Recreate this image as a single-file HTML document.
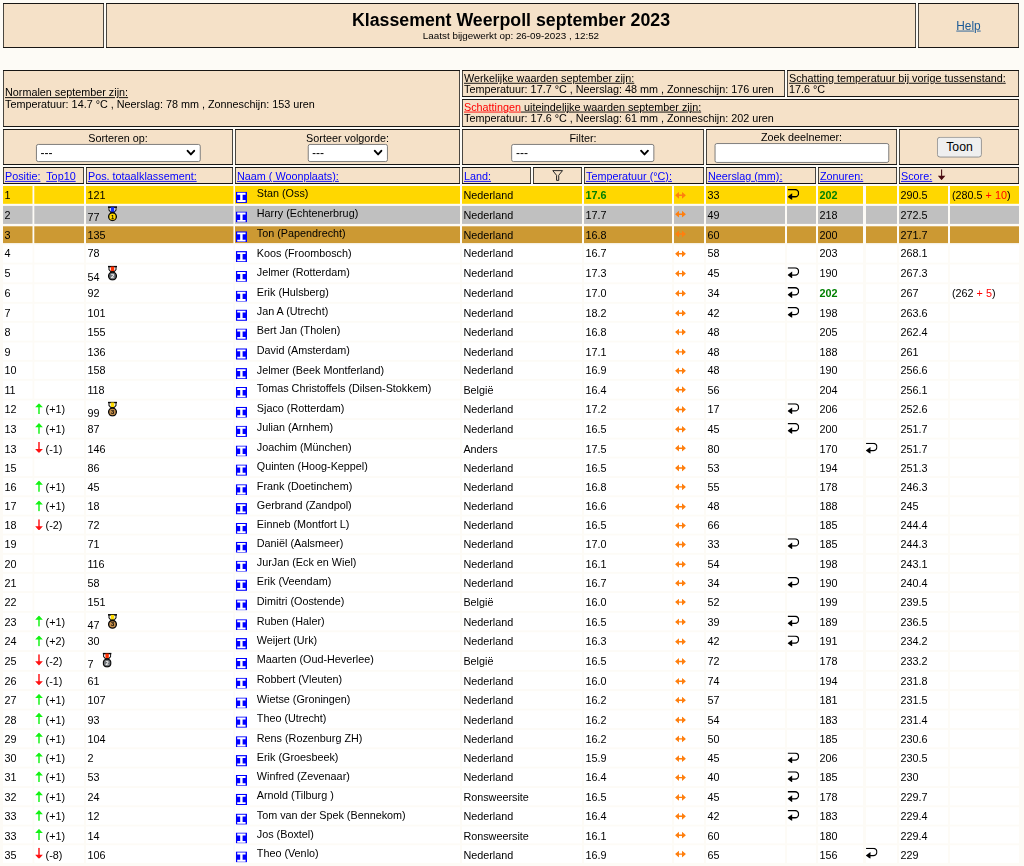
<!DOCTYPE html>
<html lang="nl">
<head>
<meta charset="utf-8">
<title>Klassement Weerpoll september 2023</title>
<style>
html,body{margin:0;padding:0;background:#fdfbf6;overflow:hidden;}
body{width:1024px;height:866px;position:relative;}
#w{position:absolute;left:0;top:0;width:1137.78px;height:962.3px;transform:scale(0.9);transform-origin:0 0;
   font-family:"Liberation Sans",Arial,sans-serif;font-size:12px;line-height:14px;color:#000;}
#w div,#w a,#w svg,#w select,#w input,#w button,#w span.a{position:absolute;box-sizing:border-box;white-space:nowrap;}
.hb{background:#181614;}
.hc{background:#f5e1c8;}
.c{background:#fff;}
.t{color:#000;}
.u{text-decoration:underline;}
a.l{color:#0000ff;text-decoration:underline;}
.g{color:#008000;font-weight:bold;}
.r{color:#ff0000;}
.lab{text-align:center;}
select.s{appearance:none;-webkit-appearance:none;background:#fff;border:1px solid #707070;border-radius:2.5px;
  font-family:"Liberation Sans",Arial,sans-serif;font-size:13.33px;color:#000;padding:0 0 0 4px;margin:0;}
input.s{background:#fff;border:1px solid #707070;border-radius:2.5px;padding:0;margin:0;}
button.s{background:#efefef;border:1px solid #8a8a8a;border-radius:3.5px;font-family:"Liberation Sans",Arial,sans-serif;
  font-size:13.6px;color:#000;padding:0;margin:0;text-align:center;}
</style>
</head>
<body>
<svg id="bg" width="1024" height="866" viewBox="0 0 1024 866" style="position:absolute;left:0;top:0">
<rect x="3" y="3" width="101" height="45" fill="#4a4640"/>
<rect x="3" y="3" width="101" height="1" fill="#181614"/>
<rect x="3" y="47" width="101" height="1" fill="#181614"/>
<rect x="4" y="4" width="99" height="43" fill="#f5e1c8"/>
<rect x="106" y="3" width="810" height="45" fill="#4a4640"/>
<rect x="106" y="3" width="810" height="1" fill="#181614"/>
<rect x="106" y="47" width="810" height="1" fill="#181614"/>
<rect x="107" y="4" width="808" height="43" fill="#f5e1c8"/>
<rect x="918" y="3" width="101" height="45" fill="#4a4640"/>
<rect x="918" y="3" width="101" height="1" fill="#181614"/>
<rect x="918" y="47" width="101" height="1" fill="#181614"/>
<rect x="919" y="4" width="99" height="43" fill="#f5e1c8"/>
<rect x="3" y="70" width="457" height="57" fill="#4a4640"/>
<rect x="3" y="70" width="457" height="1" fill="#181614"/>
<rect x="3" y="126" width="457" height="1" fill="#181614"/>
<rect x="4" y="71" width="455" height="55" fill="#f5e1c8"/>
<rect x="462" y="70" width="323" height="27" fill="#4a4640"/>
<rect x="462" y="70" width="323" height="1" fill="#181614"/>
<rect x="462" y="96" width="323" height="1" fill="#181614"/>
<rect x="463" y="71" width="321" height="25" fill="#f5e1c8"/>
<rect x="787" y="70" width="232" height="27" fill="#4a4640"/>
<rect x="787" y="70" width="232" height="1" fill="#181614"/>
<rect x="787" y="96" width="232" height="1" fill="#181614"/>
<rect x="788" y="71" width="230" height="25" fill="#f5e1c8"/>
<rect x="462" y="99" width="557" height="28" fill="#4a4640"/>
<rect x="462" y="99" width="557" height="1" fill="#181614"/>
<rect x="462" y="126" width="557" height="1" fill="#181614"/>
<rect x="463" y="100" width="555" height="26" fill="#f5e1c8"/>
<rect x="3" y="129" width="230" height="36" fill="#4a4640"/>
<rect x="3" y="129" width="230" height="1" fill="#181614"/>
<rect x="3" y="164" width="230" height="1" fill="#181614"/>
<rect x="4" y="130" width="228" height="34" fill="#f5e1c8"/>
<rect x="235" y="129" width="225" height="36" fill="#4a4640"/>
<rect x="235" y="129" width="225" height="1" fill="#181614"/>
<rect x="235" y="164" width="225" height="1" fill="#181614"/>
<rect x="236" y="130" width="223" height="34" fill="#f5e1c8"/>
<rect x="462" y="129" width="242" height="36" fill="#4a4640"/>
<rect x="462" y="129" width="242" height="1" fill="#181614"/>
<rect x="462" y="164" width="242" height="1" fill="#181614"/>
<rect x="463" y="130" width="240" height="34" fill="#f5e1c8"/>
<rect x="706" y="129" width="191" height="36" fill="#4a4640"/>
<rect x="706" y="129" width="191" height="1" fill="#181614"/>
<rect x="706" y="164" width="191" height="1" fill="#181614"/>
<rect x="707" y="130" width="189" height="34" fill="#f5e1c8"/>
<rect x="899" y="129" width="120" height="36" fill="#4a4640"/>
<rect x="899" y="129" width="120" height="1" fill="#181614"/>
<rect x="899" y="164" width="120" height="1" fill="#181614"/>
<rect x="900" y="130" width="118" height="34" fill="#f5e1c8"/>
<rect x="3" y="167" width="81" height="17" fill="#4a4640"/>
<rect x="3" y="167" width="81" height="1" fill="#181614"/>
<rect x="3" y="183" width="81" height="1" fill="#181614"/>
<rect x="4" y="168" width="79" height="15" fill="#f5e1c8"/>
<rect x="86" y="167" width="147" height="17" fill="#4a4640"/>
<rect x="86" y="167" width="147" height="1" fill="#181614"/>
<rect x="86" y="183" width="147" height="1" fill="#181614"/>
<rect x="87" y="168" width="145" height="15" fill="#f5e1c8"/>
<rect x="235" y="167" width="225" height="17" fill="#4a4640"/>
<rect x="235" y="167" width="225" height="1" fill="#181614"/>
<rect x="235" y="183" width="225" height="1" fill="#181614"/>
<rect x="236" y="168" width="223" height="15" fill="#f5e1c8"/>
<rect x="462" y="167" width="69" height="17" fill="#4a4640"/>
<rect x="462" y="167" width="69" height="1" fill="#181614"/>
<rect x="462" y="183" width="69" height="1" fill="#181614"/>
<rect x="463" y="168" width="67" height="15" fill="#f5e1c8"/>
<rect x="533" y="167" width="49" height="17" fill="#4a4640"/>
<rect x="533" y="167" width="49" height="1" fill="#181614"/>
<rect x="533" y="183" width="49" height="1" fill="#181614"/>
<rect x="534" y="168" width="47" height="15" fill="#f5e1c8"/>
<rect x="584" y="167" width="120" height="17" fill="#4a4640"/>
<rect x="584" y="167" width="120" height="1" fill="#181614"/>
<rect x="584" y="183" width="120" height="1" fill="#181614"/>
<rect x="585" y="168" width="118" height="15" fill="#f5e1c8"/>
<rect x="706" y="167" width="110" height="17" fill="#4a4640"/>
<rect x="706" y="167" width="110" height="1" fill="#181614"/>
<rect x="706" y="183" width="110" height="1" fill="#181614"/>
<rect x="707" y="168" width="108" height="15" fill="#f5e1c8"/>
<rect x="818" y="167" width="79" height="17" fill="#4a4640"/>
<rect x="818" y="167" width="79" height="1" fill="#181614"/>
<rect x="818" y="183" width="79" height="1" fill="#181614"/>
<rect x="819" y="168" width="77" height="15" fill="#f5e1c8"/>
<rect x="899" y="167" width="120" height="17" fill="#4a4640"/>
<rect x="899" y="167" width="120" height="1" fill="#181614"/>
<rect x="899" y="183" width="120" height="1" fill="#181614"/>
<rect x="900" y="168" width="118" height="15" fill="#f5e1c8"/>
<rect x="3" y="186" width="29.5" height="17.8" fill="#ffd700"/>
<rect x="34.3" y="186" width="49.7" height="17.8" fill="#ffd700"/>
<rect x="86" y="186" width="147.4" height="17.8" fill="#ffd700"/>
<rect x="235" y="186" width="225" height="17.8" fill="#ffd700"/>
<rect x="462" y="186" width="120" height="17.8" fill="#ffd700"/>
<rect x="584" y="186" width="88" height="17.8" fill="#ffd700"/>
<rect x="674" y="186" width="30" height="17.8" fill="#ffd700"/>
<rect x="706" y="186" width="79" height="17.8" fill="#ffd700"/>
<rect x="787" y="186" width="29" height="17.8" fill="#ffd700"/>
<rect x="818" y="186" width="45" height="17.8" fill="#ffd700"/>
<rect x="866" y="186" width="31" height="17.8" fill="#ffd700"/>
<rect x="899" y="186" width="49" height="17.8" fill="#ffd700"/>
<rect x="950" y="186" width="69" height="17.8" fill="#ffd700"/>
<rect x="3" y="205.9" width="29.5" height="18" fill="#c0c0c0"/>
<rect x="34.3" y="205.9" width="49.7" height="18" fill="#c0c0c0"/>
<rect x="86" y="205.9" width="147.4" height="18" fill="#c0c0c0"/>
<rect x="235" y="205.9" width="225" height="18" fill="#c0c0c0"/>
<rect x="462" y="205.9" width="120" height="18" fill="#c0c0c0"/>
<rect x="584" y="205.9" width="88" height="18" fill="#c0c0c0"/>
<rect x="674" y="205.9" width="30" height="18" fill="#c0c0c0"/>
<rect x="706" y="205.9" width="79" height="18" fill="#c0c0c0"/>
<rect x="787" y="205.9" width="29" height="18" fill="#c0c0c0"/>
<rect x="818" y="205.9" width="45" height="18" fill="#c0c0c0"/>
<rect x="866" y="205.9" width="31" height="18" fill="#c0c0c0"/>
<rect x="899" y="205.9" width="49" height="18" fill="#c0c0c0"/>
<rect x="950" y="205.9" width="69" height="18" fill="#c0c0c0"/>
<rect x="3" y="226.3" width="29.5" height="16.8" fill="#cc9933"/>
<rect x="34.3" y="226.3" width="49.7" height="16.8" fill="#cc9933"/>
<rect x="86" y="226.3" width="147.4" height="16.8" fill="#cc9933"/>
<rect x="235" y="226.3" width="225" height="16.8" fill="#cc9933"/>
<rect x="462" y="226.3" width="120" height="16.8" fill="#cc9933"/>
<rect x="584" y="226.3" width="88" height="16.8" fill="#cc9933"/>
<rect x="674" y="226.3" width="30" height="16.8" fill="#cc9933"/>
<rect x="706" y="226.3" width="79" height="16.8" fill="#cc9933"/>
<rect x="787" y="226.3" width="29" height="16.8" fill="#cc9933"/>
<rect x="818" y="226.3" width="45" height="16.8" fill="#cc9933"/>
<rect x="866" y="226.3" width="31" height="16.8" fill="#cc9933"/>
<rect x="899" y="226.3" width="49" height="16.8" fill="#cc9933"/>
<rect x="950" y="226.3" width="69" height="16.8" fill="#cc9933"/>
<rect x="3" y="244.75" width="29.5" height="17.85" fill="#ffffff"/>
<rect x="34.3" y="244.75" width="49.7" height="17.85" fill="#ffffff"/>
<rect x="86" y="244.75" width="147.4" height="17.85" fill="#ffffff"/>
<rect x="235" y="244.75" width="225" height="17.85" fill="#ffffff"/>
<rect x="462" y="244.75" width="120" height="17.85" fill="#ffffff"/>
<rect x="584" y="244.75" width="88" height="17.85" fill="#ffffff"/>
<rect x="674" y="244.75" width="30" height="17.85" fill="#ffffff"/>
<rect x="706" y="244.75" width="79" height="17.85" fill="#ffffff"/>
<rect x="787" y="244.75" width="29" height="17.85" fill="#ffffff"/>
<rect x="818" y="244.75" width="45" height="17.85" fill="#ffffff"/>
<rect x="866" y="244.75" width="31" height="17.85" fill="#ffffff"/>
<rect x="899" y="244.75" width="49" height="17.85" fill="#ffffff"/>
<rect x="950" y="244.75" width="69" height="17.85" fill="#ffffff"/>
<rect x="3" y="264.5" width="29.5" height="17.85" fill="#ffffff"/>
<rect x="34.3" y="264.5" width="49.7" height="17.85" fill="#ffffff"/>
<rect x="86" y="264.5" width="147.4" height="17.85" fill="#ffffff"/>
<rect x="235" y="264.5" width="225" height="17.85" fill="#ffffff"/>
<rect x="462" y="264.5" width="120" height="17.85" fill="#ffffff"/>
<rect x="584" y="264.5" width="88" height="17.85" fill="#ffffff"/>
<rect x="674" y="264.5" width="30" height="17.85" fill="#ffffff"/>
<rect x="706" y="264.5" width="79" height="17.85" fill="#ffffff"/>
<rect x="787" y="264.5" width="29" height="17.85" fill="#ffffff"/>
<rect x="818" y="264.5" width="45" height="17.85" fill="#ffffff"/>
<rect x="866" y="264.5" width="31" height="17.85" fill="#ffffff"/>
<rect x="899" y="264.5" width="49" height="17.85" fill="#ffffff"/>
<rect x="950" y="264.5" width="69" height="17.85" fill="#ffffff"/>
<rect x="3" y="284.25" width="29.5" height="17.6" fill="#ffffff"/>
<rect x="34.3" y="284.25" width="49.7" height="17.6" fill="#ffffff"/>
<rect x="86" y="284.25" width="147.4" height="17.6" fill="#ffffff"/>
<rect x="235" y="284.25" width="225" height="17.6" fill="#ffffff"/>
<rect x="462" y="284.25" width="120" height="17.6" fill="#ffffff"/>
<rect x="584" y="284.25" width="88" height="17.6" fill="#ffffff"/>
<rect x="674" y="284.25" width="30" height="17.6" fill="#ffffff"/>
<rect x="706" y="284.25" width="79" height="17.6" fill="#ffffff"/>
<rect x="787" y="284.25" width="29" height="17.6" fill="#ffffff"/>
<rect x="818" y="284.25" width="45" height="17.6" fill="#ffffff"/>
<rect x="866" y="284.25" width="31" height="17.6" fill="#ffffff"/>
<rect x="899" y="284.25" width="49" height="17.6" fill="#ffffff"/>
<rect x="950" y="284.25" width="69" height="17.6" fill="#ffffff"/>
<rect x="3" y="303.75" width="29.5" height="17.1" fill="#ffffff"/>
<rect x="34.3" y="303.75" width="49.7" height="17.1" fill="#ffffff"/>
<rect x="86" y="303.75" width="147.4" height="17.1" fill="#ffffff"/>
<rect x="235" y="303.75" width="225" height="17.1" fill="#ffffff"/>
<rect x="462" y="303.75" width="120" height="17.1" fill="#ffffff"/>
<rect x="584" y="303.75" width="88" height="17.1" fill="#ffffff"/>
<rect x="674" y="303.75" width="30" height="17.1" fill="#ffffff"/>
<rect x="706" y="303.75" width="79" height="17.1" fill="#ffffff"/>
<rect x="787" y="303.75" width="29" height="17.1" fill="#ffffff"/>
<rect x="818" y="303.75" width="45" height="17.1" fill="#ffffff"/>
<rect x="866" y="303.75" width="31" height="17.1" fill="#ffffff"/>
<rect x="899" y="303.75" width="49" height="17.1" fill="#ffffff"/>
<rect x="950" y="303.75" width="69" height="17.1" fill="#ffffff"/>
<rect x="3" y="322.75" width="29.5" height="17.85" fill="#ffffff"/>
<rect x="34.3" y="322.75" width="49.7" height="17.85" fill="#ffffff"/>
<rect x="86" y="322.75" width="147.4" height="17.85" fill="#ffffff"/>
<rect x="235" y="322.75" width="225" height="17.85" fill="#ffffff"/>
<rect x="462" y="322.75" width="120" height="17.85" fill="#ffffff"/>
<rect x="584" y="322.75" width="88" height="17.85" fill="#ffffff"/>
<rect x="674" y="322.75" width="30" height="17.85" fill="#ffffff"/>
<rect x="706" y="322.75" width="79" height="17.85" fill="#ffffff"/>
<rect x="787" y="322.75" width="29" height="17.85" fill="#ffffff"/>
<rect x="818" y="322.75" width="45" height="17.85" fill="#ffffff"/>
<rect x="866" y="322.75" width="31" height="17.85" fill="#ffffff"/>
<rect x="899" y="322.75" width="49" height="17.85" fill="#ffffff"/>
<rect x="950" y="322.75" width="69" height="17.85" fill="#ffffff"/>
<rect x="3" y="342.5" width="29.5" height="17.35" fill="#ffffff"/>
<rect x="34.3" y="342.5" width="49.7" height="17.35" fill="#ffffff"/>
<rect x="86" y="342.5" width="147.4" height="17.35" fill="#ffffff"/>
<rect x="235" y="342.5" width="225" height="17.35" fill="#ffffff"/>
<rect x="462" y="342.5" width="120" height="17.35" fill="#ffffff"/>
<rect x="584" y="342.5" width="88" height="17.35" fill="#ffffff"/>
<rect x="674" y="342.5" width="30" height="17.35" fill="#ffffff"/>
<rect x="706" y="342.5" width="79" height="17.35" fill="#ffffff"/>
<rect x="787" y="342.5" width="29" height="17.35" fill="#ffffff"/>
<rect x="818" y="342.5" width="45" height="17.35" fill="#ffffff"/>
<rect x="866" y="342.5" width="31" height="17.35" fill="#ffffff"/>
<rect x="899" y="342.5" width="49" height="17.35" fill="#ffffff"/>
<rect x="950" y="342.5" width="69" height="17.35" fill="#ffffff"/>
<rect x="3" y="361.75" width="29.5" height="17.1" fill="#ffffff"/>
<rect x="34.3" y="361.75" width="49.7" height="17.1" fill="#ffffff"/>
<rect x="86" y="361.75" width="147.4" height="17.1" fill="#ffffff"/>
<rect x="235" y="361.75" width="225" height="17.1" fill="#ffffff"/>
<rect x="462" y="361.75" width="120" height="17.1" fill="#ffffff"/>
<rect x="584" y="361.75" width="88" height="17.1" fill="#ffffff"/>
<rect x="674" y="361.75" width="30" height="17.1" fill="#ffffff"/>
<rect x="706" y="361.75" width="79" height="17.1" fill="#ffffff"/>
<rect x="787" y="361.75" width="29" height="17.1" fill="#ffffff"/>
<rect x="818" y="361.75" width="45" height="17.1" fill="#ffffff"/>
<rect x="866" y="361.75" width="31" height="17.1" fill="#ffffff"/>
<rect x="899" y="361.75" width="49" height="17.1" fill="#ffffff"/>
<rect x="950" y="361.75" width="69" height="17.1" fill="#ffffff"/>
<rect x="3" y="380.75" width="29.5" height="17.85" fill="#ffffff"/>
<rect x="34.3" y="380.75" width="49.7" height="17.85" fill="#ffffff"/>
<rect x="86" y="380.75" width="147.4" height="17.85" fill="#ffffff"/>
<rect x="235" y="380.75" width="225" height="17.85" fill="#ffffff"/>
<rect x="462" y="380.75" width="120" height="17.85" fill="#ffffff"/>
<rect x="584" y="380.75" width="88" height="17.85" fill="#ffffff"/>
<rect x="674" y="380.75" width="30" height="17.85" fill="#ffffff"/>
<rect x="706" y="380.75" width="79" height="17.85" fill="#ffffff"/>
<rect x="787" y="380.75" width="29" height="17.85" fill="#ffffff"/>
<rect x="818" y="380.75" width="45" height="17.85" fill="#ffffff"/>
<rect x="866" y="380.75" width="31" height="17.85" fill="#ffffff"/>
<rect x="899" y="380.75" width="49" height="17.85" fill="#ffffff"/>
<rect x="950" y="380.75" width="69" height="17.85" fill="#ffffff"/>
<rect x="3" y="400.5" width="29.5" height="17.6" fill="#ffffff"/>
<rect x="34.3" y="400.5" width="49.7" height="17.6" fill="#ffffff"/>
<rect x="86" y="400.5" width="147.4" height="17.6" fill="#ffffff"/>
<rect x="235" y="400.5" width="225" height="17.6" fill="#ffffff"/>
<rect x="462" y="400.5" width="120" height="17.6" fill="#ffffff"/>
<rect x="584" y="400.5" width="88" height="17.6" fill="#ffffff"/>
<rect x="674" y="400.5" width="30" height="17.6" fill="#ffffff"/>
<rect x="706" y="400.5" width="79" height="17.6" fill="#ffffff"/>
<rect x="787" y="400.5" width="29" height="17.6" fill="#ffffff"/>
<rect x="818" y="400.5" width="45" height="17.6" fill="#ffffff"/>
<rect x="866" y="400.5" width="31" height="17.6" fill="#ffffff"/>
<rect x="899" y="400.5" width="49" height="17.6" fill="#ffffff"/>
<rect x="950" y="400.5" width="69" height="17.6" fill="#ffffff"/>
<rect x="3" y="420" width="29.5" height="17.6" fill="#ffffff"/>
<rect x="34.3" y="420" width="49.7" height="17.6" fill="#ffffff"/>
<rect x="86" y="420" width="147.4" height="17.6" fill="#ffffff"/>
<rect x="235" y="420" width="225" height="17.6" fill="#ffffff"/>
<rect x="462" y="420" width="120" height="17.6" fill="#ffffff"/>
<rect x="584" y="420" width="88" height="17.6" fill="#ffffff"/>
<rect x="674" y="420" width="30" height="17.6" fill="#ffffff"/>
<rect x="706" y="420" width="79" height="17.6" fill="#ffffff"/>
<rect x="787" y="420" width="29" height="17.6" fill="#ffffff"/>
<rect x="818" y="420" width="45" height="17.6" fill="#ffffff"/>
<rect x="866" y="420" width="31" height="17.6" fill="#ffffff"/>
<rect x="899" y="420" width="49" height="17.6" fill="#ffffff"/>
<rect x="950" y="420" width="69" height="17.6" fill="#ffffff"/>
<rect x="3" y="439.5" width="29.5" height="17.1" fill="#ffffff"/>
<rect x="34.3" y="439.5" width="49.7" height="17.1" fill="#ffffff"/>
<rect x="86" y="439.5" width="147.4" height="17.1" fill="#ffffff"/>
<rect x="235" y="439.5" width="225" height="17.1" fill="#ffffff"/>
<rect x="462" y="439.5" width="120" height="17.1" fill="#ffffff"/>
<rect x="584" y="439.5" width="88" height="17.1" fill="#ffffff"/>
<rect x="674" y="439.5" width="30" height="17.1" fill="#ffffff"/>
<rect x="706" y="439.5" width="79" height="17.1" fill="#ffffff"/>
<rect x="787" y="439.5" width="29" height="17.1" fill="#ffffff"/>
<rect x="818" y="439.5" width="45" height="17.1" fill="#ffffff"/>
<rect x="866" y="439.5" width="31" height="17.1" fill="#ffffff"/>
<rect x="899" y="439.5" width="49" height="17.1" fill="#ffffff"/>
<rect x="950" y="439.5" width="69" height="17.1" fill="#ffffff"/>
<rect x="3" y="458.5" width="29.5" height="17.6" fill="#ffffff"/>
<rect x="34.3" y="458.5" width="49.7" height="17.6" fill="#ffffff"/>
<rect x="86" y="458.5" width="147.4" height="17.6" fill="#ffffff"/>
<rect x="235" y="458.5" width="225" height="17.6" fill="#ffffff"/>
<rect x="462" y="458.5" width="120" height="17.6" fill="#ffffff"/>
<rect x="584" y="458.5" width="88" height="17.6" fill="#ffffff"/>
<rect x="674" y="458.5" width="30" height="17.6" fill="#ffffff"/>
<rect x="706" y="458.5" width="79" height="17.6" fill="#ffffff"/>
<rect x="787" y="458.5" width="29" height="17.6" fill="#ffffff"/>
<rect x="818" y="458.5" width="45" height="17.6" fill="#ffffff"/>
<rect x="866" y="458.5" width="31" height="17.6" fill="#ffffff"/>
<rect x="899" y="458.5" width="49" height="17.6" fill="#ffffff"/>
<rect x="950" y="458.5" width="69" height="17.6" fill="#ffffff"/>
<rect x="3" y="478" width="29.5" height="17.35" fill="#ffffff"/>
<rect x="34.3" y="478" width="49.7" height="17.35" fill="#ffffff"/>
<rect x="86" y="478" width="147.4" height="17.35" fill="#ffffff"/>
<rect x="235" y="478" width="225" height="17.35" fill="#ffffff"/>
<rect x="462" y="478" width="120" height="17.35" fill="#ffffff"/>
<rect x="584" y="478" width="88" height="17.35" fill="#ffffff"/>
<rect x="674" y="478" width="30" height="17.35" fill="#ffffff"/>
<rect x="706" y="478" width="79" height="17.35" fill="#ffffff"/>
<rect x="787" y="478" width="29" height="17.35" fill="#ffffff"/>
<rect x="818" y="478" width="45" height="17.35" fill="#ffffff"/>
<rect x="866" y="478" width="31" height="17.35" fill="#ffffff"/>
<rect x="899" y="478" width="49" height="17.35" fill="#ffffff"/>
<rect x="950" y="478" width="69" height="17.35" fill="#ffffff"/>
<rect x="3" y="497.25" width="29.5" height="17.35" fill="#ffffff"/>
<rect x="34.3" y="497.25" width="49.7" height="17.35" fill="#ffffff"/>
<rect x="86" y="497.25" width="147.4" height="17.35" fill="#ffffff"/>
<rect x="235" y="497.25" width="225" height="17.35" fill="#ffffff"/>
<rect x="462" y="497.25" width="120" height="17.35" fill="#ffffff"/>
<rect x="584" y="497.25" width="88" height="17.35" fill="#ffffff"/>
<rect x="674" y="497.25" width="30" height="17.35" fill="#ffffff"/>
<rect x="706" y="497.25" width="79" height="17.35" fill="#ffffff"/>
<rect x="787" y="497.25" width="29" height="17.35" fill="#ffffff"/>
<rect x="818" y="497.25" width="45" height="17.35" fill="#ffffff"/>
<rect x="866" y="497.25" width="31" height="17.35" fill="#ffffff"/>
<rect x="899" y="497.25" width="49" height="17.35" fill="#ffffff"/>
<rect x="950" y="497.25" width="69" height="17.35" fill="#ffffff"/>
<rect x="3" y="516.5" width="29.5" height="17.1" fill="#ffffff"/>
<rect x="34.3" y="516.5" width="49.7" height="17.1" fill="#ffffff"/>
<rect x="86" y="516.5" width="147.4" height="17.1" fill="#ffffff"/>
<rect x="235" y="516.5" width="225" height="17.1" fill="#ffffff"/>
<rect x="462" y="516.5" width="120" height="17.1" fill="#ffffff"/>
<rect x="584" y="516.5" width="88" height="17.1" fill="#ffffff"/>
<rect x="674" y="516.5" width="30" height="17.1" fill="#ffffff"/>
<rect x="706" y="516.5" width="79" height="17.1" fill="#ffffff"/>
<rect x="787" y="516.5" width="29" height="17.1" fill="#ffffff"/>
<rect x="818" y="516.5" width="45" height="17.1" fill="#ffffff"/>
<rect x="866" y="516.5" width="31" height="17.1" fill="#ffffff"/>
<rect x="899" y="516.5" width="49" height="17.1" fill="#ffffff"/>
<rect x="950" y="516.5" width="69" height="17.1" fill="#ffffff"/>
<rect x="3" y="535.5" width="29.5" height="17.35" fill="#ffffff"/>
<rect x="34.3" y="535.5" width="49.7" height="17.35" fill="#ffffff"/>
<rect x="86" y="535.5" width="147.4" height="17.35" fill="#ffffff"/>
<rect x="235" y="535.5" width="225" height="17.35" fill="#ffffff"/>
<rect x="462" y="535.5" width="120" height="17.35" fill="#ffffff"/>
<rect x="584" y="535.5" width="88" height="17.35" fill="#ffffff"/>
<rect x="674" y="535.5" width="30" height="17.35" fill="#ffffff"/>
<rect x="706" y="535.5" width="79" height="17.35" fill="#ffffff"/>
<rect x="787" y="535.5" width="29" height="17.35" fill="#ffffff"/>
<rect x="818" y="535.5" width="45" height="17.35" fill="#ffffff"/>
<rect x="866" y="535.5" width="31" height="17.35" fill="#ffffff"/>
<rect x="899" y="535.5" width="49" height="17.35" fill="#ffffff"/>
<rect x="950" y="535.5" width="69" height="17.35" fill="#ffffff"/>
<rect x="3" y="554.75" width="29.5" height="17.1" fill="#ffffff"/>
<rect x="34.3" y="554.75" width="49.7" height="17.1" fill="#ffffff"/>
<rect x="86" y="554.75" width="147.4" height="17.1" fill="#ffffff"/>
<rect x="235" y="554.75" width="225" height="17.1" fill="#ffffff"/>
<rect x="462" y="554.75" width="120" height="17.1" fill="#ffffff"/>
<rect x="584" y="554.75" width="88" height="17.1" fill="#ffffff"/>
<rect x="674" y="554.75" width="30" height="17.1" fill="#ffffff"/>
<rect x="706" y="554.75" width="79" height="17.1" fill="#ffffff"/>
<rect x="787" y="554.75" width="29" height="17.1" fill="#ffffff"/>
<rect x="818" y="554.75" width="45" height="17.1" fill="#ffffff"/>
<rect x="866" y="554.75" width="31" height="17.1" fill="#ffffff"/>
<rect x="899" y="554.75" width="49" height="17.1" fill="#ffffff"/>
<rect x="950" y="554.75" width="69" height="17.1" fill="#ffffff"/>
<rect x="3" y="573.75" width="29.5" height="17.35" fill="#ffffff"/>
<rect x="34.3" y="573.75" width="49.7" height="17.35" fill="#ffffff"/>
<rect x="86" y="573.75" width="147.4" height="17.35" fill="#ffffff"/>
<rect x="235" y="573.75" width="225" height="17.35" fill="#ffffff"/>
<rect x="462" y="573.75" width="120" height="17.35" fill="#ffffff"/>
<rect x="584" y="573.75" width="88" height="17.35" fill="#ffffff"/>
<rect x="674" y="573.75" width="30" height="17.35" fill="#ffffff"/>
<rect x="706" y="573.75" width="79" height="17.35" fill="#ffffff"/>
<rect x="787" y="573.75" width="29" height="17.35" fill="#ffffff"/>
<rect x="818" y="573.75" width="45" height="17.35" fill="#ffffff"/>
<rect x="866" y="573.75" width="31" height="17.35" fill="#ffffff"/>
<rect x="899" y="573.75" width="49" height="17.35" fill="#ffffff"/>
<rect x="950" y="573.75" width="69" height="17.35" fill="#ffffff"/>
<rect x="3" y="593" width="29.5" height="17.85" fill="#ffffff"/>
<rect x="34.3" y="593" width="49.7" height="17.85" fill="#ffffff"/>
<rect x="86" y="593" width="147.4" height="17.85" fill="#ffffff"/>
<rect x="235" y="593" width="225" height="17.85" fill="#ffffff"/>
<rect x="462" y="593" width="120" height="17.85" fill="#ffffff"/>
<rect x="584" y="593" width="88" height="17.85" fill="#ffffff"/>
<rect x="674" y="593" width="30" height="17.85" fill="#ffffff"/>
<rect x="706" y="593" width="79" height="17.85" fill="#ffffff"/>
<rect x="787" y="593" width="29" height="17.85" fill="#ffffff"/>
<rect x="818" y="593" width="45" height="17.85" fill="#ffffff"/>
<rect x="866" y="593" width="31" height="17.85" fill="#ffffff"/>
<rect x="899" y="593" width="49" height="17.85" fill="#ffffff"/>
<rect x="950" y="593" width="69" height="17.85" fill="#ffffff"/>
<rect x="3" y="612.75" width="29.5" height="17.6" fill="#ffffff"/>
<rect x="34.3" y="612.75" width="49.7" height="17.6" fill="#ffffff"/>
<rect x="86" y="612.75" width="147.4" height="17.6" fill="#ffffff"/>
<rect x="235" y="612.75" width="225" height="17.6" fill="#ffffff"/>
<rect x="462" y="612.75" width="120" height="17.6" fill="#ffffff"/>
<rect x="584" y="612.75" width="88" height="17.6" fill="#ffffff"/>
<rect x="674" y="612.75" width="30" height="17.6" fill="#ffffff"/>
<rect x="706" y="612.75" width="79" height="17.6" fill="#ffffff"/>
<rect x="787" y="612.75" width="29" height="17.6" fill="#ffffff"/>
<rect x="818" y="612.75" width="45" height="17.6" fill="#ffffff"/>
<rect x="866" y="612.75" width="31" height="17.6" fill="#ffffff"/>
<rect x="899" y="612.75" width="49" height="17.6" fill="#ffffff"/>
<rect x="950" y="612.75" width="69" height="17.6" fill="#ffffff"/>
<rect x="3" y="632.25" width="29.5" height="17.85" fill="#ffffff"/>
<rect x="34.3" y="632.25" width="49.7" height="17.85" fill="#ffffff"/>
<rect x="86" y="632.25" width="147.4" height="17.85" fill="#ffffff"/>
<rect x="235" y="632.25" width="225" height="17.85" fill="#ffffff"/>
<rect x="462" y="632.25" width="120" height="17.85" fill="#ffffff"/>
<rect x="584" y="632.25" width="88" height="17.85" fill="#ffffff"/>
<rect x="674" y="632.25" width="30" height="17.85" fill="#ffffff"/>
<rect x="706" y="632.25" width="79" height="17.85" fill="#ffffff"/>
<rect x="787" y="632.25" width="29" height="17.85" fill="#ffffff"/>
<rect x="818" y="632.25" width="45" height="17.85" fill="#ffffff"/>
<rect x="866" y="632.25" width="31" height="17.85" fill="#ffffff"/>
<rect x="899" y="632.25" width="49" height="17.85" fill="#ffffff"/>
<rect x="950" y="632.25" width="69" height="17.85" fill="#ffffff"/>
<rect x="3" y="652" width="29.5" height="17.85" fill="#ffffff"/>
<rect x="34.3" y="652" width="49.7" height="17.85" fill="#ffffff"/>
<rect x="86" y="652" width="147.4" height="17.85" fill="#ffffff"/>
<rect x="235" y="652" width="225" height="17.85" fill="#ffffff"/>
<rect x="462" y="652" width="120" height="17.85" fill="#ffffff"/>
<rect x="584" y="652" width="88" height="17.85" fill="#ffffff"/>
<rect x="674" y="652" width="30" height="17.85" fill="#ffffff"/>
<rect x="706" y="652" width="79" height="17.85" fill="#ffffff"/>
<rect x="787" y="652" width="29" height="17.85" fill="#ffffff"/>
<rect x="818" y="652" width="45" height="17.85" fill="#ffffff"/>
<rect x="866" y="652" width="31" height="17.85" fill="#ffffff"/>
<rect x="899" y="652" width="49" height="17.85" fill="#ffffff"/>
<rect x="950" y="652" width="69" height="17.85" fill="#ffffff"/>
<rect x="3" y="671.75" width="29.5" height="17.45" fill="#ffffff"/>
<rect x="34.3" y="671.75" width="49.7" height="17.45" fill="#ffffff"/>
<rect x="86" y="671.75" width="147.4" height="17.45" fill="#ffffff"/>
<rect x="235" y="671.75" width="225" height="17.45" fill="#ffffff"/>
<rect x="462" y="671.75" width="120" height="17.45" fill="#ffffff"/>
<rect x="584" y="671.75" width="88" height="17.45" fill="#ffffff"/>
<rect x="674" y="671.75" width="30" height="17.45" fill="#ffffff"/>
<rect x="706" y="671.75" width="79" height="17.45" fill="#ffffff"/>
<rect x="787" y="671.75" width="29" height="17.45" fill="#ffffff"/>
<rect x="818" y="671.75" width="45" height="17.45" fill="#ffffff"/>
<rect x="866" y="671.75" width="31" height="17.45" fill="#ffffff"/>
<rect x="899" y="671.75" width="49" height="17.45" fill="#ffffff"/>
<rect x="950" y="671.75" width="69" height="17.45" fill="#ffffff"/>
<rect x="3" y="691.1" width="29.5" height="17.5" fill="#ffffff"/>
<rect x="34.3" y="691.1" width="49.7" height="17.5" fill="#ffffff"/>
<rect x="86" y="691.1" width="147.4" height="17.5" fill="#ffffff"/>
<rect x="235" y="691.1" width="225" height="17.5" fill="#ffffff"/>
<rect x="462" y="691.1" width="120" height="17.5" fill="#ffffff"/>
<rect x="584" y="691.1" width="88" height="17.5" fill="#ffffff"/>
<rect x="674" y="691.1" width="30" height="17.5" fill="#ffffff"/>
<rect x="706" y="691.1" width="79" height="17.5" fill="#ffffff"/>
<rect x="787" y="691.1" width="29" height="17.5" fill="#ffffff"/>
<rect x="818" y="691.1" width="45" height="17.5" fill="#ffffff"/>
<rect x="866" y="691.1" width="31" height="17.5" fill="#ffffff"/>
<rect x="899" y="691.1" width="49" height="17.5" fill="#ffffff"/>
<rect x="950" y="691.1" width="69" height="17.5" fill="#ffffff"/>
<rect x="3" y="710.5" width="29.5" height="17.5" fill="#ffffff"/>
<rect x="34.3" y="710.5" width="49.7" height="17.5" fill="#ffffff"/>
<rect x="86" y="710.5" width="147.4" height="17.5" fill="#ffffff"/>
<rect x="235" y="710.5" width="225" height="17.5" fill="#ffffff"/>
<rect x="462" y="710.5" width="120" height="17.5" fill="#ffffff"/>
<rect x="584" y="710.5" width="88" height="17.5" fill="#ffffff"/>
<rect x="674" y="710.5" width="30" height="17.5" fill="#ffffff"/>
<rect x="706" y="710.5" width="79" height="17.5" fill="#ffffff"/>
<rect x="787" y="710.5" width="29" height="17.5" fill="#ffffff"/>
<rect x="818" y="710.5" width="45" height="17.5" fill="#ffffff"/>
<rect x="866" y="710.5" width="31" height="17.5" fill="#ffffff"/>
<rect x="899" y="710.5" width="49" height="17.5" fill="#ffffff"/>
<rect x="950" y="710.5" width="69" height="17.5" fill="#ffffff"/>
<rect x="3" y="729.9" width="29.5" height="17.45" fill="#ffffff"/>
<rect x="34.3" y="729.9" width="49.7" height="17.45" fill="#ffffff"/>
<rect x="86" y="729.9" width="147.4" height="17.45" fill="#ffffff"/>
<rect x="235" y="729.9" width="225" height="17.45" fill="#ffffff"/>
<rect x="462" y="729.9" width="120" height="17.45" fill="#ffffff"/>
<rect x="584" y="729.9" width="88" height="17.45" fill="#ffffff"/>
<rect x="674" y="729.9" width="30" height="17.45" fill="#ffffff"/>
<rect x="706" y="729.9" width="79" height="17.45" fill="#ffffff"/>
<rect x="787" y="729.9" width="29" height="17.45" fill="#ffffff"/>
<rect x="818" y="729.9" width="45" height="17.45" fill="#ffffff"/>
<rect x="866" y="729.9" width="31" height="17.45" fill="#ffffff"/>
<rect x="899" y="729.9" width="49" height="17.45" fill="#ffffff"/>
<rect x="950" y="729.9" width="69" height="17.45" fill="#ffffff"/>
<rect x="3" y="749.25" width="29.5" height="17.35" fill="#ffffff"/>
<rect x="34.3" y="749.25" width="49.7" height="17.35" fill="#ffffff"/>
<rect x="86" y="749.25" width="147.4" height="17.35" fill="#ffffff"/>
<rect x="235" y="749.25" width="225" height="17.35" fill="#ffffff"/>
<rect x="462" y="749.25" width="120" height="17.35" fill="#ffffff"/>
<rect x="584" y="749.25" width="88" height="17.35" fill="#ffffff"/>
<rect x="674" y="749.25" width="30" height="17.35" fill="#ffffff"/>
<rect x="706" y="749.25" width="79" height="17.35" fill="#ffffff"/>
<rect x="787" y="749.25" width="29" height="17.35" fill="#ffffff"/>
<rect x="818" y="749.25" width="45" height="17.35" fill="#ffffff"/>
<rect x="866" y="749.25" width="31" height="17.35" fill="#ffffff"/>
<rect x="899" y="749.25" width="49" height="17.35" fill="#ffffff"/>
<rect x="950" y="749.25" width="69" height="17.35" fill="#ffffff"/>
<rect x="3" y="768.5" width="29.5" height="17.6" fill="#ffffff"/>
<rect x="34.3" y="768.5" width="49.7" height="17.6" fill="#ffffff"/>
<rect x="86" y="768.5" width="147.4" height="17.6" fill="#ffffff"/>
<rect x="235" y="768.5" width="225" height="17.6" fill="#ffffff"/>
<rect x="462" y="768.5" width="120" height="17.6" fill="#ffffff"/>
<rect x="584" y="768.5" width="88" height="17.6" fill="#ffffff"/>
<rect x="674" y="768.5" width="30" height="17.6" fill="#ffffff"/>
<rect x="706" y="768.5" width="79" height="17.6" fill="#ffffff"/>
<rect x="787" y="768.5" width="29" height="17.6" fill="#ffffff"/>
<rect x="818" y="768.5" width="45" height="17.6" fill="#ffffff"/>
<rect x="866" y="768.5" width="31" height="17.6" fill="#ffffff"/>
<rect x="899" y="768.5" width="49" height="17.6" fill="#ffffff"/>
<rect x="950" y="768.5" width="69" height="17.6" fill="#ffffff"/>
<rect x="3" y="788" width="29.5" height="17.35" fill="#ffffff"/>
<rect x="34.3" y="788" width="49.7" height="17.35" fill="#ffffff"/>
<rect x="86" y="788" width="147.4" height="17.35" fill="#ffffff"/>
<rect x="235" y="788" width="225" height="17.35" fill="#ffffff"/>
<rect x="462" y="788" width="120" height="17.35" fill="#ffffff"/>
<rect x="584" y="788" width="88" height="17.35" fill="#ffffff"/>
<rect x="674" y="788" width="30" height="17.35" fill="#ffffff"/>
<rect x="706" y="788" width="79" height="17.35" fill="#ffffff"/>
<rect x="787" y="788" width="29" height="17.35" fill="#ffffff"/>
<rect x="818" y="788" width="45" height="17.35" fill="#ffffff"/>
<rect x="866" y="788" width="31" height="17.35" fill="#ffffff"/>
<rect x="899" y="788" width="49" height="17.35" fill="#ffffff"/>
<rect x="950" y="788" width="69" height="17.35" fill="#ffffff"/>
<rect x="3" y="807.25" width="29.5" height="17.35" fill="#ffffff"/>
<rect x="34.3" y="807.25" width="49.7" height="17.35" fill="#ffffff"/>
<rect x="86" y="807.25" width="147.4" height="17.35" fill="#ffffff"/>
<rect x="235" y="807.25" width="225" height="17.35" fill="#ffffff"/>
<rect x="462" y="807.25" width="120" height="17.35" fill="#ffffff"/>
<rect x="584" y="807.25" width="88" height="17.35" fill="#ffffff"/>
<rect x="674" y="807.25" width="30" height="17.35" fill="#ffffff"/>
<rect x="706" y="807.25" width="79" height="17.35" fill="#ffffff"/>
<rect x="787" y="807.25" width="29" height="17.35" fill="#ffffff"/>
<rect x="818" y="807.25" width="45" height="17.35" fill="#ffffff"/>
<rect x="866" y="807.25" width="31" height="17.35" fill="#ffffff"/>
<rect x="899" y="807.25" width="49" height="17.35" fill="#ffffff"/>
<rect x="950" y="807.25" width="69" height="17.35" fill="#ffffff"/>
<rect x="3" y="826.5" width="29.5" height="16.85" fill="#ffffff"/>
<rect x="34.3" y="826.5" width="49.7" height="16.85" fill="#ffffff"/>
<rect x="86" y="826.5" width="147.4" height="16.85" fill="#ffffff"/>
<rect x="235" y="826.5" width="225" height="16.85" fill="#ffffff"/>
<rect x="462" y="826.5" width="120" height="16.85" fill="#ffffff"/>
<rect x="584" y="826.5" width="88" height="16.85" fill="#ffffff"/>
<rect x="674" y="826.5" width="30" height="16.85" fill="#ffffff"/>
<rect x="706" y="826.5" width="79" height="16.85" fill="#ffffff"/>
<rect x="787" y="826.5" width="29" height="16.85" fill="#ffffff"/>
<rect x="818" y="826.5" width="45" height="16.85" fill="#ffffff"/>
<rect x="866" y="826.5" width="31" height="16.85" fill="#ffffff"/>
<rect x="899" y="826.5" width="49" height="16.85" fill="#ffffff"/>
<rect x="950" y="826.5" width="69" height="16.85" fill="#ffffff"/>
<rect x="3" y="845.25" width="29.5" height="17.6" fill="#ffffff"/>
<rect x="34.3" y="845.25" width="49.7" height="17.6" fill="#ffffff"/>
<rect x="86" y="845.25" width="147.4" height="17.6" fill="#ffffff"/>
<rect x="235" y="845.25" width="225" height="17.6" fill="#ffffff"/>
<rect x="462" y="845.25" width="120" height="17.6" fill="#ffffff"/>
<rect x="584" y="845.25" width="88" height="17.6" fill="#ffffff"/>
<rect x="674" y="845.25" width="30" height="17.6" fill="#ffffff"/>
<rect x="706" y="845.25" width="79" height="17.6" fill="#ffffff"/>
<rect x="787" y="845.25" width="29" height="17.6" fill="#ffffff"/>
<rect x="818" y="845.25" width="45" height="17.6" fill="#ffffff"/>
<rect x="866" y="845.25" width="31" height="17.6" fill="#ffffff"/>
<rect x="899" y="845.25" width="49" height="17.6" fill="#ffffff"/>
<rect x="950" y="845.25" width="69" height="17.6" fill="#ffffff"/>
</svg>
<div id="w">

<div class="t" style="left:117.78px;top:10.99px;width:900px;text-align:center;font-size:19.72px;line-height:22px;font-weight:bold;">Klassement Weerpoll september 2023</div>
<div class="t" style="left:117.78px;top:33.10px;width:900px;text-align:center;font-size:10.94px;line-height:12px;">Laatst bijgewerkt op: 26-09-2023 , 12:52</div>
<div class="t" style="left:1020px;top:20.82px;width:112.22px;text-align:center;font-size:13.2px;line-height:16px;"><a class="l" style="position:static;color:#1c5a96" href="#">Help</a></div>
<div class="t" style="left:5.56px;top:96.33px;"><span class="u">Normalen september zijn:</span></div>
<div class="t" style="left:5.56px;top:108.78px;">Temperatuur: 14.7 °C , Neerslag: 78 mm , Zonneschijn: 153 uren</div>
<div class="t" style="left:515.56px;top:80.00px;"><span class="u">Werkelijke waarden september zijn:</span></div>
<div class="t" style="left:515.56px;top:92.44px;">Temperatuur: 17.7 °C , Neerslag: 48 mm , Zonneschijn: 176 uren</div>
<div class="t" style="left:876.67px;top:80.00px;"><span class="u">Schatting temperatuur bij vorige tussenstand:</span></div>
<div class="t" style="left:876.67px;top:92.44px;">17.6 °C</div>
<div class="t" style="left:515.56px;top:112.44px;"><span class="u r">Schattingen</span><span class="u"> uiteindelijke waarden september zijn:</span></div>
<div class="t" style="left:515.56px;top:124.78px;">Temperatuur: 17.6 °C , Neerslag: 61 mm , Zonneschijn: 202 uren</div>
<div class="t" style="left:3.33px;top:147.00px;width:255.56px;text-align:center;">Sorteren op:</div>
<select class="s" style="left:40px;top:159.78px;width:182.89px;height:20.22px"><option>---</option></select>
<svg class="i" style="left:206.89px;top:166.11px" width="10.22" height="7.11" viewBox="0 0 9.8 6.8" ><path d="M0.7 0.8L4.9 5.3L9.1 0.8" fill="none" stroke="#000" stroke-width="2.05"/></svg>
<div class="t" style="left:261.11px;top:147.00px;width:250px;text-align:center;">Sorteer volgorde:</div>
<select class="s" style="left:341.78px;top:159.78px;width:89.33px;height:20.22px"><option>---</option></select>
<svg class="i" style="left:415.11px;top:166.11px" width="10.22" height="7.11" viewBox="0 0 9.8 6.8" ><path d="M0.7 0.8L4.9 5.3L9.1 0.8" fill="none" stroke="#000" stroke-width="2.05"/></svg>
<div class="t" style="left:513.33px;top:147.00px;width:268.89px;text-align:center;">Filter:</div>
<select class="s" style="left:568.44px;top:159.78px;width:158.89px;height:20.22px"><option>---</option></select>
<svg class="i" style="left:711.33px;top:166.11px" width="10.22" height="7.11" viewBox="0 0 9.8 6.8" ><path d="M0.7 0.8L4.9 5.3L9.1 0.8" fill="none" stroke="#000" stroke-width="2.05"/></svg>
<div class="t" style="left:784.44px;top:145.78px;width:212.22px;text-align:center;">Zoek deelnemer:</div>
<input class="s" type="text" style="left:794.44px;top:158.78px;width:194px;height:22.33px">
<button class="s" style="left:1041.33px;top:152.11px;width:49.56px;height:22.67px">Toon</button>
<div class="t" style="left:5.56px;top:188.89px;"><a class="l" style="position:static" href="#">Positie:</a>&nbsp; <a class="l" style="position:static" href="#">Top10</a></div>
<div class="t" style="left:97.78px;top:188.89px;"><a class="l" style="position:static" href="#">Pos. totaalklassement:</a></div>
<div class="t" style="left:263.33px;top:188.89px;"><a class="l" style="position:static" href="#">Naam ( Woonplaats):</a></div>
<div class="t" style="left:515.56px;top:188.89px;"><a class="l" style="position:static" href="#">Land:</a></div>
<svg class="i" style="left:613.44px;top:189px" width="13.22" height="12" viewBox="0 0 12.4 12" ><path d="M0.8 0.6H11.6L7.4 5.8V11.4H5V5.8z" fill="none" stroke="#222" stroke-width="1.1" stroke-linejoin="miter"/></svg>
<div class="t" style="left:651.11px;top:188.89px;"><a class="l" style="position:static" href="#">Temperatuur (°C):</a></div>
<div class="t" style="left:786.67px;top:188.89px;"><a class="l" style="position:static" href="#">Neerslag (mm):</a></div>
<div class="t" style="left:911.11px;top:188.89px;"><a class="l" style="position:static" href="#">Zonuren:</a></div>
<div class="t" style="left:1001.11px;top:188.89px;"><a class="l" style="position:static" href="#">Score:</a></div>
<svg class="i" style="left:1042.11px;top:188px" width="8.44" height="12.22" viewBox="0 0 8.4 12.2" ><path d="M4.2 12.2L8.4 7.4H4.8V0H3.6V7.4H0z" fill="#4a0c12"/></svg>
<div class="t" style="left:4.89px;top:210.11px;">1</div>
<div class="t" style="left:97.11px;top:210.11px;">121</div>
<svg class="i" style="left:262.33px;top:213.33px" width="12.44" height="12.44" viewBox="0 0 12 12" ><rect width="12" height="12" fill="#0000ff"/><path d="M1.5 1.2h9v2h-3.2v5.8h3.2v2h-9v-2h3.2v-5.8h-3.2z" fill="#fff"/></svg>
<div class="t" style="left:285.33px;top:208.44px;">Stan (Oss)</div>
<div class="t" style="left:514.89px;top:210.11px;">Nederland</div>
<div class="t g" style="left:650.44px;top:210.11px;">17.6</div>
<svg class="i" style="left:750.33px;top:212.78px" width="12.22" height="8" viewBox="0 0 12 8" ><path d="M0 4L4.3 0.2V3.2H7.7V0.2L12 4L7.7 7.8V4.8H4.3V7.8z" fill="#ff7f0e"/></svg>
<div class="t" style="left:786px;top:210.11px;">33</div>
<svg class="i" style="left:875.11px;top:209.89px" width="13" height="12" viewBox="0 0 13 12" ><path d="M0.3 0.7H8.4A3.9 3.9 0 0 1 8.4 8.6H4.5" fill="none" stroke="#000" stroke-width="1.45"/><path d="M0 8.6L5.2 4.7V12.4z" fill="#000"/></svg>
<div class="t g" style="left:910.44px;top:210.11px;">202</div>
<div class="t" style="left:1000.44px;top:210.11px;">290.5</div>
<div class="t" style="left:1057.78px;top:210.11px;">(280.5 <span class="r">+ 10</span>)</div>
<div class="t" style="left:4.89px;top:231.78px;">2</div>
<div class="t" style="left:97.11px;top:235.00px;">77</div>
<svg class="i" style="left:120px;top:229.22px" width="10" height="17" viewBox="0 0 10 17" ><path d="M1 1.6V4.6L3.2 7V1.6zM9 1.6V4.6L6.8 7V1.6z" fill="#f4f4fa"/><rect x="0" y="0.3" width="10" height="1.7" fill="#000"/><path d="M1.1 1.2V4.5L3.3 7M8.9 1.2V4.5L6.7 7" fill="none" stroke="#111" stroke-width="1.15"/><rect x="3.1" y="1.2" width="3.8" height="5.6" fill="#1030ff"/><rect x="2.9" y="6.3" width="4.2" height="1.3" fill="#0a0a0a"/><circle cx="5" cy="11.7" r="4.3" fill="#ffd800" stroke="#0a0a0a" stroke-width="1.5"/><text x="5" y="14" font-family="Liberation Sans, sans-serif" font-size="6.4" font-weight="bold" text-anchor="middle" fill="#000">1</text></svg>
<svg class="i" style="left:262.33px;top:235px" width="12.44" height="12.44" viewBox="0 0 12 12" ><rect width="12" height="12" fill="#0000ff"/><path d="M1.5 1.2h9v2h-3.2v5.8h3.2v2h-9v-2h3.2v-5.8h-3.2z" fill="#fff"/></svg>
<div class="t" style="left:285.33px;top:230.11px;">Harry (Echtenerbrug)</div>
<div class="t" style="left:514.89px;top:231.78px;">Nederland</div>
<div class="t" style="left:650.44px;top:231.78px;">17.7</div>
<svg class="i" style="left:750.33px;top:234.44px" width="12.22" height="8" viewBox="0 0 12 8" ><path d="M0 4L4.3 0.2V3.2H7.7V0.2L12 4L7.7 7.8V4.8H4.3V7.8z" fill="#ff7f0e"/></svg>
<div class="t" style="left:786px;top:231.78px;">49</div>
<div class="t" style="left:910.44px;top:231.78px;">218</div>
<div class="t" style="left:1000.44px;top:231.78px;">272.5</div>
<div class="t" style="left:4.89px;top:253.72px;">3</div>
<div class="t" style="left:97.11px;top:253.72px;">135</div>
<svg class="i" style="left:262.33px;top:256.94px" width="12.44" height="12.44" viewBox="0 0 12 12" ><rect width="12" height="12" fill="#0000ff"/><path d="M1.5 1.2h9v2h-3.2v5.8h3.2v2h-9v-2h3.2v-5.8h-3.2z" fill="#fff"/></svg>
<div class="t" style="left:285.33px;top:252.06px;">Ton (Papendrecht)</div>
<div class="t" style="left:514.89px;top:253.72px;">Nederland</div>
<div class="t" style="left:650.44px;top:253.72px;">16.8</div>
<svg class="i" style="left:750.33px;top:256.39px" width="12.22" height="8" viewBox="0 0 12 8" ><path d="M0 4L4.3 0.2V3.2H7.7V0.2L12 4L7.7 7.8V4.8H4.3V7.8z" fill="#ff7f0e"/></svg>
<div class="t" style="left:786px;top:253.72px;">60</div>
<div class="t" style="left:910.44px;top:253.72px;">200</div>
<div class="t" style="left:1000.44px;top:253.72px;">271.7</div>
<div class="t" style="left:4.89px;top:275.39px;">4</div>
<div class="t" style="left:97.11px;top:275.39px;">78</div>
<svg class="i" style="left:262.33px;top:278.61px" width="12.44" height="12.44" viewBox="0 0 12 12" ><rect width="12" height="12" fill="#0000ff"/><path d="M1.5 1.2h9v2h-3.2v5.8h3.2v2h-9v-2h3.2v-5.8h-3.2z" fill="#fff"/></svg>
<div class="t" style="left:285.33px;top:273.72px;">Koos (Froombosch)</div>
<div class="t" style="left:514.89px;top:275.39px;">Nederland</div>
<div class="t" style="left:650.44px;top:275.39px;">16.7</div>
<svg class="i" style="left:750.33px;top:278.06px" width="12.22" height="8" viewBox="0 0 12 8" ><path d="M0 4L4.3 0.2V3.2H7.7V0.2L12 4L7.7 7.8V4.8H4.3V7.8z" fill="#ff7f0e"/></svg>
<div class="t" style="left:786px;top:275.39px;">58</div>
<div class="t" style="left:910.44px;top:275.39px;">203</div>
<div class="t" style="left:1000.44px;top:275.39px;">268.1</div>
<div class="t" style="left:4.89px;top:297.33px;">5</div>
<div class="t" style="left:97.11px;top:300.56px;">54</div>
<svg class="i" style="left:120px;top:294.78px" width="10" height="17" viewBox="0 0 10 17" ><path d="M1 1.6V4.6L3.2 7V1.6zM9 1.6V4.6L6.8 7V1.6z" fill="#f4f4fa"/><rect x="0" y="0.3" width="10" height="1.7" fill="#000"/><path d="M1.1 1.2V4.5L3.3 7M8.9 1.2V4.5L6.7 7" fill="none" stroke="#111" stroke-width="1.15"/><rect x="3.1" y="1.2" width="3.8" height="5.6" fill="#ff3000"/><rect x="2.9" y="6.3" width="4.2" height="1.3" fill="#0a0a0a"/><circle cx="5" cy="11.7" r="4.3" fill="#70757a" stroke="#0a0a0a" stroke-width="1.5"/><text x="5" y="14" font-family="Liberation Sans, sans-serif" font-size="6.4" font-weight="bold" text-anchor="middle" fill="#fff">2</text></svg>
<svg class="i" style="left:262.33px;top:300.56px" width="12.44" height="12.44" viewBox="0 0 12 12" ><rect width="12" height="12" fill="#0000ff"/><path d="M1.5 1.2h9v2h-3.2v5.8h3.2v2h-9v-2h3.2v-5.8h-3.2z" fill="#fff"/></svg>
<div class="t" style="left:285.33px;top:295.67px;">Jelmer (Rotterdam)</div>
<div class="t" style="left:514.89px;top:297.33px;">Nederland</div>
<div class="t" style="left:650.44px;top:297.33px;">17.3</div>
<svg class="i" style="left:750.33px;top:300px" width="12.22" height="8" viewBox="0 0 12 8" ><path d="M0 4L4.3 0.2V3.2H7.7V0.2L12 4L7.7 7.8V4.8H4.3V7.8z" fill="#ff7f0e"/></svg>
<div class="t" style="left:786px;top:297.33px;">45</div>
<svg class="i" style="left:875.11px;top:297.11px" width="13" height="12" viewBox="0 0 13 12" ><path d="M0.3 0.7H8.4A3.9 3.9 0 0 1 8.4 8.6H4.5" fill="none" stroke="#000" stroke-width="1.45"/><path d="M0 8.6L5.2 4.7V12.4z" fill="#000"/></svg>
<div class="t" style="left:910.44px;top:297.33px;">190</div>
<div class="t" style="left:1000.44px;top:297.33px;">267.3</div>
<div class="t" style="left:4.89px;top:319.28px;">6</div>
<div class="t" style="left:97.11px;top:319.28px;">92</div>
<svg class="i" style="left:262.33px;top:322.5px" width="12.44" height="12.44" viewBox="0 0 12 12" ><rect width="12" height="12" fill="#0000ff"/><path d="M1.5 1.2h9v2h-3.2v5.8h3.2v2h-9v-2h3.2v-5.8h-3.2z" fill="#fff"/></svg>
<div class="t" style="left:285.33px;top:317.61px;">Erik (Hulsberg)</div>
<div class="t" style="left:514.89px;top:319.28px;">Nederland</div>
<div class="t" style="left:650.44px;top:319.28px;">17.0</div>
<svg class="i" style="left:750.33px;top:321.94px" width="12.22" height="8" viewBox="0 0 12 8" ><path d="M0 4L4.3 0.2V3.2H7.7V0.2L12 4L7.7 7.8V4.8H4.3V7.8z" fill="#ff7f0e"/></svg>
<div class="t" style="left:786px;top:319.28px;">34</div>
<svg class="i" style="left:875.11px;top:319.06px" width="13" height="12" viewBox="0 0 13 12" ><path d="M0.3 0.7H8.4A3.9 3.9 0 0 1 8.4 8.6H4.5" fill="none" stroke="#000" stroke-width="1.45"/><path d="M0 8.6L5.2 4.7V12.4z" fill="#000"/></svg>
<div class="t g" style="left:910.44px;top:319.28px;">202</div>
<div class="t" style="left:1000.44px;top:319.28px;">267</div>
<div class="t" style="left:1057.78px;top:319.28px;">(262 <span class="r">+ 5</span>)</div>
<div class="t" style="left:4.89px;top:340.94px;">7</div>
<div class="t" style="left:97.11px;top:340.94px;">101</div>
<svg class="i" style="left:262.33px;top:344.17px" width="12.44" height="12.44" viewBox="0 0 12 12" ><rect width="12" height="12" fill="#0000ff"/><path d="M1.5 1.2h9v2h-3.2v5.8h3.2v2h-9v-2h3.2v-5.8h-3.2z" fill="#fff"/></svg>
<div class="t" style="left:285.33px;top:339.28px;">Jan A (Utrecht)</div>
<div class="t" style="left:514.89px;top:340.94px;">Nederland</div>
<div class="t" style="left:650.44px;top:340.94px;">18.2</div>
<svg class="i" style="left:750.33px;top:343.61px" width="12.22" height="8" viewBox="0 0 12 8" ><path d="M0 4L4.3 0.2V3.2H7.7V0.2L12 4L7.7 7.8V4.8H4.3V7.8z" fill="#ff7f0e"/></svg>
<div class="t" style="left:786px;top:340.94px;">42</div>
<svg class="i" style="left:875.11px;top:340.72px" width="13" height="12" viewBox="0 0 13 12" ><path d="M0.3 0.7H8.4A3.9 3.9 0 0 1 8.4 8.6H4.5" fill="none" stroke="#000" stroke-width="1.45"/><path d="M0 8.6L5.2 4.7V12.4z" fill="#000"/></svg>
<div class="t" style="left:910.44px;top:340.94px;">198</div>
<div class="t" style="left:1000.44px;top:340.94px;">263.6</div>
<div class="t" style="left:4.89px;top:362.06px;">8</div>
<div class="t" style="left:97.11px;top:362.06px;">155</div>
<svg class="i" style="left:262.33px;top:365.28px" width="12.44" height="12.44" viewBox="0 0 12 12" ><rect width="12" height="12" fill="#0000ff"/><path d="M1.5 1.2h9v2h-3.2v5.8h3.2v2h-9v-2h3.2v-5.8h-3.2z" fill="#fff"/></svg>
<div class="t" style="left:285.33px;top:360.39px;">Bert Jan (Tholen)</div>
<div class="t" style="left:514.89px;top:362.06px;">Nederland</div>
<div class="t" style="left:650.44px;top:362.06px;">16.8</div>
<svg class="i" style="left:750.33px;top:364.72px" width="12.22" height="8" viewBox="0 0 12 8" ><path d="M0 4L4.3 0.2V3.2H7.7V0.2L12 4L7.7 7.8V4.8H4.3V7.8z" fill="#ff7f0e"/></svg>
<div class="t" style="left:786px;top:362.06px;">48</div>
<div class="t" style="left:910.44px;top:362.06px;">205</div>
<div class="t" style="left:1000.44px;top:362.06px;">262.4</div>
<div class="t" style="left:4.89px;top:384.00px;">9</div>
<div class="t" style="left:97.11px;top:384.00px;">136</div>
<svg class="i" style="left:262.33px;top:387.22px" width="12.44" height="12.44" viewBox="0 0 12 12" ><rect width="12" height="12" fill="#0000ff"/><path d="M1.5 1.2h9v2h-3.2v5.8h3.2v2h-9v-2h3.2v-5.8h-3.2z" fill="#fff"/></svg>
<div class="t" style="left:285.33px;top:382.33px;">David (Amsterdam)</div>
<div class="t" style="left:514.89px;top:384.00px;">Nederland</div>
<div class="t" style="left:650.44px;top:384.00px;">17.1</div>
<svg class="i" style="left:750.33px;top:386.67px" width="12.22" height="8" viewBox="0 0 12 8" ><path d="M0 4L4.3 0.2V3.2H7.7V0.2L12 4L7.7 7.8V4.8H4.3V7.8z" fill="#ff7f0e"/></svg>
<div class="t" style="left:786px;top:384.00px;">48</div>
<div class="t" style="left:910.44px;top:384.00px;">188</div>
<div class="t" style="left:1000.44px;top:384.00px;">261</div>
<div class="t" style="left:4.89px;top:405.39px;">10</div>
<div class="t" style="left:97.11px;top:405.39px;">158</div>
<svg class="i" style="left:262.33px;top:408.61px" width="12.44" height="12.44" viewBox="0 0 12 12" ><rect width="12" height="12" fill="#0000ff"/><path d="M1.5 1.2h9v2h-3.2v5.8h3.2v2h-9v-2h3.2v-5.8h-3.2z" fill="#fff"/></svg>
<div class="t" style="left:285.33px;top:403.72px;">Jelmer (Beek Montferland)</div>
<div class="t" style="left:514.89px;top:405.39px;">Nederland</div>
<div class="t" style="left:650.44px;top:405.39px;">16.9</div>
<svg class="i" style="left:750.33px;top:408.06px" width="12.22" height="8" viewBox="0 0 12 8" ><path d="M0 4L4.3 0.2V3.2H7.7V0.2L12 4L7.7 7.8V4.8H4.3V7.8z" fill="#ff7f0e"/></svg>
<div class="t" style="left:786px;top:405.39px;">48</div>
<div class="t" style="left:910.44px;top:405.39px;">190</div>
<div class="t" style="left:1000.44px;top:405.39px;">256.6</div>
<div class="t" style="left:4.89px;top:426.50px;">11</div>
<div class="t" style="left:97.11px;top:426.50px;">118</div>
<svg class="i" style="left:262.33px;top:429.72px" width="12.44" height="12.44" viewBox="0 0 12 12" ><rect width="12" height="12" fill="#0000ff"/><path d="M1.5 1.2h9v2h-3.2v5.8h3.2v2h-9v-2h3.2v-5.8h-3.2z" fill="#fff"/></svg>
<div class="t" style="left:285.33px;top:424.83px;">Tomas Christoffels (Dilsen-Stokkem)</div>
<div class="t" style="left:514.89px;top:426.50px;">België</div>
<div class="t" style="left:650.44px;top:426.50px;">16.4</div>
<svg class="i" style="left:750.33px;top:429.17px" width="12.22" height="8" viewBox="0 0 12 8" ><path d="M0 4L4.3 0.2V3.2H7.7V0.2L12 4L7.7 7.8V4.8H4.3V7.8z" fill="#ff7f0e"/></svg>
<div class="t" style="left:786px;top:426.50px;">56</div>
<div class="t" style="left:910.44px;top:426.50px;">204</div>
<div class="t" style="left:1000.44px;top:426.50px;">256.1</div>
<div class="t" style="left:4.89px;top:448.44px;">12</div>
<svg class="i" style="left:38.89px;top:448px" width="8.67" height="12.44" viewBox="0 0 8.6 12.4" ><path d="M4.3 0L8.6 4.6H5.1V12.4H3.5V4.6H0z" fill="#12f312"/></svg>
<div class="t" style="left:50.67px;top:448.44px;">(+1)</div>
<div class="t" style="left:97.11px;top:451.67px;">99</div>
<svg class="i" style="left:120px;top:445.89px" width="10" height="17" viewBox="0 0 10 17" ><path d="M1 1.6V4.6L3.2 7V1.6zM9 1.6V4.6L6.8 7V1.6z" fill="#f4f4fa"/><rect x="0" y="0.3" width="10" height="1.7" fill="#000"/><path d="M1.1 1.2V4.5L3.3 7M8.9 1.2V4.5L6.7 7" fill="none" stroke="#111" stroke-width="1.15"/><rect x="3.1" y="1.2" width="3.8" height="5.6" fill="#ffdc00"/><rect x="2.9" y="6.3" width="4.2" height="1.3" fill="#0a0a0a"/><circle cx="5" cy="11.7" r="4.3" fill="#c48e4a" stroke="#0a0a0a" stroke-width="1.5"/><text x="5" y="14" font-family="Liberation Sans, sans-serif" font-size="6.4" font-weight="bold" text-anchor="middle" fill="#000">3</text></svg>
<svg class="i" style="left:262.33px;top:451.67px" width="12.44" height="12.44" viewBox="0 0 12 12" ><rect width="12" height="12" fill="#0000ff"/><path d="M1.5 1.2h9v2h-3.2v5.8h3.2v2h-9v-2h3.2v-5.8h-3.2z" fill="#fff"/></svg>
<div class="t" style="left:285.33px;top:446.78px;">Sjaco (Rotterdam)</div>
<div class="t" style="left:514.89px;top:448.44px;">Nederland</div>
<div class="t" style="left:650.44px;top:448.44px;">17.2</div>
<svg class="i" style="left:750.33px;top:451.11px" width="12.22" height="8" viewBox="0 0 12 8" ><path d="M0 4L4.3 0.2V3.2H7.7V0.2L12 4L7.7 7.8V4.8H4.3V7.8z" fill="#ff7f0e"/></svg>
<div class="t" style="left:786px;top:448.44px;">17</div>
<svg class="i" style="left:875.11px;top:448.22px" width="13" height="12" viewBox="0 0 13 12" ><path d="M0.3 0.7H8.4A3.9 3.9 0 0 1 8.4 8.6H4.5" fill="none" stroke="#000" stroke-width="1.45"/><path d="M0 8.6L5.2 4.7V12.4z" fill="#000"/></svg>
<div class="t" style="left:910.44px;top:448.44px;">206</div>
<div class="t" style="left:1000.44px;top:448.44px;">252.6</div>
<div class="t" style="left:4.89px;top:470.11px;">13</div>
<svg class="i" style="left:38.89px;top:469.67px" width="8.67" height="12.44" viewBox="0 0 8.6 12.4" ><path d="M4.3 0L8.6 4.6H5.1V12.4H3.5V4.6H0z" fill="#12f312"/></svg>
<div class="t" style="left:50.67px;top:470.11px;">(+1)</div>
<div class="t" style="left:97.11px;top:470.11px;">87</div>
<svg class="i" style="left:262.33px;top:473.33px" width="12.44" height="12.44" viewBox="0 0 12 12" ><rect width="12" height="12" fill="#0000ff"/><path d="M1.5 1.2h9v2h-3.2v5.8h3.2v2h-9v-2h3.2v-5.8h-3.2z" fill="#fff"/></svg>
<div class="t" style="left:285.33px;top:468.44px;">Julian (Arnhem)</div>
<div class="t" style="left:514.89px;top:470.11px;">Nederland</div>
<div class="t" style="left:650.44px;top:470.11px;">16.5</div>
<svg class="i" style="left:750.33px;top:472.78px" width="12.22" height="8" viewBox="0 0 12 8" ><path d="M0 4L4.3 0.2V3.2H7.7V0.2L12 4L7.7 7.8V4.8H4.3V7.8z" fill="#ff7f0e"/></svg>
<div class="t" style="left:786px;top:470.11px;">45</div>
<svg class="i" style="left:875.11px;top:469.89px" width="13" height="12" viewBox="0 0 13 12" ><path d="M0.3 0.7H8.4A3.9 3.9 0 0 1 8.4 8.6H4.5" fill="none" stroke="#000" stroke-width="1.45"/><path d="M0 8.6L5.2 4.7V12.4z" fill="#000"/></svg>
<div class="t" style="left:910.44px;top:470.11px;">200</div>
<div class="t" style="left:1000.44px;top:470.11px;">251.7</div>
<div class="t" style="left:4.89px;top:491.78px;">13</div>
<svg class="i" style="left:38.89px;top:491px" width="8.67" height="12.44" viewBox="0 0 8.6 12.4" ><path d="M4.3 12.4L8.6 7.8H5.1V0H3.5V7.8H0z" fill="#ff1010"/></svg>
<div class="t" style="left:50.67px;top:491.78px;">(-1)</div>
<div class="t" style="left:97.11px;top:491.78px;">146</div>
<svg class="i" style="left:262.33px;top:495px" width="12.44" height="12.44" viewBox="0 0 12 12" ><rect width="12" height="12" fill="#0000ff"/><path d="M1.5 1.2h9v2h-3.2v5.8h3.2v2h-9v-2h3.2v-5.8h-3.2z" fill="#fff"/></svg>
<div class="t" style="left:285.33px;top:490.11px;">Joachim (München)</div>
<div class="t" style="left:514.89px;top:491.78px;">Anders</div>
<div class="t" style="left:650.44px;top:491.78px;">17.5</div>
<svg class="i" style="left:750.33px;top:494.44px" width="12.22" height="8" viewBox="0 0 12 8" ><path d="M0 4L4.3 0.2V3.2H7.7V0.2L12 4L7.7 7.8V4.8H4.3V7.8z" fill="#ff7f0e"/></svg>
<div class="t" style="left:786px;top:491.78px;">80</div>
<div class="t" style="left:910.44px;top:491.78px;">170</div>
<svg class="i" style="left:962.11px;top:491.56px" width="13" height="12" viewBox="0 0 13 12" ><path d="M0.3 0.7H8.4A3.9 3.9 0 0 1 8.4 8.6H4.5" fill="none" stroke="#000" stroke-width="1.45"/><path d="M0 8.6L5.2 4.7V12.4z" fill="#000"/></svg>
<div class="t" style="left:1000.44px;top:491.78px;">251.7</div>
<div class="t" style="left:4.89px;top:512.89px;">15</div>
<div class="t" style="left:97.11px;top:512.89px;">86</div>
<svg class="i" style="left:262.33px;top:516.11px" width="12.44" height="12.44" viewBox="0 0 12 12" ><rect width="12" height="12" fill="#0000ff"/><path d="M1.5 1.2h9v2h-3.2v5.8h3.2v2h-9v-2h3.2v-5.8h-3.2z" fill="#fff"/></svg>
<div class="t" style="left:285.33px;top:511.22px;">Quinten (Hoog-Keppel)</div>
<div class="t" style="left:514.89px;top:512.89px;">Nederland</div>
<div class="t" style="left:650.44px;top:512.89px;">16.5</div>
<svg class="i" style="left:750.33px;top:515.56px" width="12.22" height="8" viewBox="0 0 12 8" ><path d="M0 4L4.3 0.2V3.2H7.7V0.2L12 4L7.7 7.8V4.8H4.3V7.8z" fill="#ff7f0e"/></svg>
<div class="t" style="left:786px;top:512.89px;">53</div>
<div class="t" style="left:910.44px;top:512.89px;">194</div>
<div class="t" style="left:1000.44px;top:512.89px;">251.3</div>
<div class="t" style="left:4.89px;top:534.56px;">16</div>
<svg class="i" style="left:38.89px;top:534.11px" width="8.67" height="12.44" viewBox="0 0 8.6 12.4" ><path d="M4.3 0L8.6 4.6H5.1V12.4H3.5V4.6H0z" fill="#12f312"/></svg>
<div class="t" style="left:50.67px;top:534.56px;">(+1)</div>
<div class="t" style="left:97.11px;top:534.56px;">45</div>
<svg class="i" style="left:262.33px;top:537.78px" width="12.44" height="12.44" viewBox="0 0 12 12" ><rect width="12" height="12" fill="#0000ff"/><path d="M1.5 1.2h9v2h-3.2v5.8h3.2v2h-9v-2h3.2v-5.8h-3.2z" fill="#fff"/></svg>
<div class="t" style="left:285.33px;top:532.89px;">Frank (Doetinchem)</div>
<div class="t" style="left:514.89px;top:534.56px;">Nederland</div>
<div class="t" style="left:650.44px;top:534.56px;">16.8</div>
<svg class="i" style="left:750.33px;top:537.22px" width="12.22" height="8" viewBox="0 0 12 8" ><path d="M0 4L4.3 0.2V3.2H7.7V0.2L12 4L7.7 7.8V4.8H4.3V7.8z" fill="#ff7f0e"/></svg>
<div class="t" style="left:786px;top:534.56px;">55</div>
<div class="t" style="left:910.44px;top:534.56px;">178</div>
<div class="t" style="left:1000.44px;top:534.56px;">246.3</div>
<div class="t" style="left:4.89px;top:555.94px;">17</div>
<svg class="i" style="left:38.89px;top:555.5px" width="8.67" height="12.44" viewBox="0 0 8.6 12.4" ><path d="M4.3 0L8.6 4.6H5.1V12.4H3.5V4.6H0z" fill="#12f312"/></svg>
<div class="t" style="left:50.67px;top:555.94px;">(+1)</div>
<div class="t" style="left:97.11px;top:555.94px;">18</div>
<svg class="i" style="left:262.33px;top:559.17px" width="12.44" height="12.44" viewBox="0 0 12 12" ><rect width="12" height="12" fill="#0000ff"/><path d="M1.5 1.2h9v2h-3.2v5.8h3.2v2h-9v-2h3.2v-5.8h-3.2z" fill="#fff"/></svg>
<div class="t" style="left:285.33px;top:554.28px;">Gerbrand (Zandpol)</div>
<div class="t" style="left:514.89px;top:555.94px;">Nederland</div>
<div class="t" style="left:650.44px;top:555.94px;">16.6</div>
<svg class="i" style="left:750.33px;top:558.61px" width="12.22" height="8" viewBox="0 0 12 8" ><path d="M0 4L4.3 0.2V3.2H7.7V0.2L12 4L7.7 7.8V4.8H4.3V7.8z" fill="#ff7f0e"/></svg>
<div class="t" style="left:786px;top:555.94px;">48</div>
<div class="t" style="left:910.44px;top:555.94px;">188</div>
<div class="t" style="left:1000.44px;top:555.94px;">245</div>
<div class="t" style="left:4.89px;top:577.33px;">18</div>
<svg class="i" style="left:38.89px;top:576.56px" width="8.67" height="12.44" viewBox="0 0 8.6 12.4" ><path d="M4.3 12.4L8.6 7.8H5.1V0H3.5V7.8H0z" fill="#ff1010"/></svg>
<div class="t" style="left:50.67px;top:577.33px;">(-2)</div>
<div class="t" style="left:97.11px;top:577.33px;">72</div>
<svg class="i" style="left:262.33px;top:580.56px" width="12.44" height="12.44" viewBox="0 0 12 12" ><rect width="12" height="12" fill="#0000ff"/><path d="M1.5 1.2h9v2h-3.2v5.8h3.2v2h-9v-2h3.2v-5.8h-3.2z" fill="#fff"/></svg>
<div class="t" style="left:285.33px;top:575.67px;">Einneb (Montfort L)</div>
<div class="t" style="left:514.89px;top:577.33px;">Nederland</div>
<div class="t" style="left:650.44px;top:577.33px;">16.5</div>
<svg class="i" style="left:750.33px;top:580px" width="12.22" height="8" viewBox="0 0 12 8" ><path d="M0 4L4.3 0.2V3.2H7.7V0.2L12 4L7.7 7.8V4.8H4.3V7.8z" fill="#ff7f0e"/></svg>
<div class="t" style="left:786px;top:577.33px;">66</div>
<div class="t" style="left:910.44px;top:577.33px;">185</div>
<div class="t" style="left:1000.44px;top:577.33px;">244.4</div>
<div class="t" style="left:4.89px;top:598.44px;">19</div>
<div class="t" style="left:97.11px;top:598.44px;">71</div>
<svg class="i" style="left:262.33px;top:601.67px" width="12.44" height="12.44" viewBox="0 0 12 12" ><rect width="12" height="12" fill="#0000ff"/><path d="M1.5 1.2h9v2h-3.2v5.8h3.2v2h-9v-2h3.2v-5.8h-3.2z" fill="#fff"/></svg>
<div class="t" style="left:285.33px;top:596.78px;">Daniël (Aalsmeer)</div>
<div class="t" style="left:514.89px;top:598.44px;">Nederland</div>
<div class="t" style="left:650.44px;top:598.44px;">17.0</div>
<svg class="i" style="left:750.33px;top:601.11px" width="12.22" height="8" viewBox="0 0 12 8" ><path d="M0 4L4.3 0.2V3.2H7.7V0.2L12 4L7.7 7.8V4.8H4.3V7.8z" fill="#ff7f0e"/></svg>
<div class="t" style="left:786px;top:598.44px;">33</div>
<svg class="i" style="left:875.11px;top:598.22px" width="13" height="12" viewBox="0 0 13 12" ><path d="M0.3 0.7H8.4A3.9 3.9 0 0 1 8.4 8.6H4.5" fill="none" stroke="#000" stroke-width="1.45"/><path d="M0 8.6L5.2 4.7V12.4z" fill="#000"/></svg>
<div class="t" style="left:910.44px;top:598.44px;">185</div>
<div class="t" style="left:1000.44px;top:598.44px;">244.3</div>
<div class="t" style="left:4.89px;top:619.83px;">20</div>
<div class="t" style="left:97.11px;top:619.83px;">116</div>
<svg class="i" style="left:262.33px;top:623.06px" width="12.44" height="12.44" viewBox="0 0 12 12" ><rect width="12" height="12" fill="#0000ff"/><path d="M1.5 1.2h9v2h-3.2v5.8h3.2v2h-9v-2h3.2v-5.8h-3.2z" fill="#fff"/></svg>
<div class="t" style="left:285.33px;top:618.17px;">JurJan (Eck en Wiel)</div>
<div class="t" style="left:514.89px;top:619.83px;">Nederland</div>
<div class="t" style="left:650.44px;top:619.83px;">16.1</div>
<svg class="i" style="left:750.33px;top:622.5px" width="12.22" height="8" viewBox="0 0 12 8" ><path d="M0 4L4.3 0.2V3.2H7.7V0.2L12 4L7.7 7.8V4.8H4.3V7.8z" fill="#ff7f0e"/></svg>
<div class="t" style="left:786px;top:619.83px;">54</div>
<div class="t" style="left:910.44px;top:619.83px;">198</div>
<div class="t" style="left:1000.44px;top:619.83px;">243.1</div>
<div class="t" style="left:4.89px;top:640.94px;">21</div>
<div class="t" style="left:97.11px;top:640.94px;">58</div>
<svg class="i" style="left:262.33px;top:644.17px" width="12.44" height="12.44" viewBox="0 0 12 12" ><rect width="12" height="12" fill="#0000ff"/><path d="M1.5 1.2h9v2h-3.2v5.8h3.2v2h-9v-2h3.2v-5.8h-3.2z" fill="#fff"/></svg>
<div class="t" style="left:285.33px;top:639.28px;">Erik (Veendam)</div>
<div class="t" style="left:514.89px;top:640.94px;">Nederland</div>
<div class="t" style="left:650.44px;top:640.94px;">16.7</div>
<svg class="i" style="left:750.33px;top:643.61px" width="12.22" height="8" viewBox="0 0 12 8" ><path d="M0 4L4.3 0.2V3.2H7.7V0.2L12 4L7.7 7.8V4.8H4.3V7.8z" fill="#ff7f0e"/></svg>
<div class="t" style="left:786px;top:640.94px;">34</div>
<svg class="i" style="left:875.11px;top:640.72px" width="13" height="12" viewBox="0 0 13 12" ><path d="M0.3 0.7H8.4A3.9 3.9 0 0 1 8.4 8.6H4.5" fill="none" stroke="#000" stroke-width="1.45"/><path d="M0 8.6L5.2 4.7V12.4z" fill="#000"/></svg>
<div class="t" style="left:910.44px;top:640.94px;">190</div>
<div class="t" style="left:1000.44px;top:640.94px;">240.4</div>
<div class="t" style="left:4.89px;top:662.33px;">22</div>
<div class="t" style="left:97.11px;top:662.33px;">151</div>
<svg class="i" style="left:262.33px;top:665.56px" width="12.44" height="12.44" viewBox="0 0 12 12" ><rect width="12" height="12" fill="#0000ff"/><path d="M1.5 1.2h9v2h-3.2v5.8h3.2v2h-9v-2h3.2v-5.8h-3.2z" fill="#fff"/></svg>
<div class="t" style="left:285.33px;top:660.67px;">Dimitri (Oostende)</div>
<div class="t" style="left:514.89px;top:662.33px;">België</div>
<div class="t" style="left:650.44px;top:662.33px;">16.0</div>
<svg class="i" style="left:750.33px;top:665px" width="12.22" height="8" viewBox="0 0 12 8" ><path d="M0 4L4.3 0.2V3.2H7.7V0.2L12 4L7.7 7.8V4.8H4.3V7.8z" fill="#ff7f0e"/></svg>
<div class="t" style="left:786px;top:662.33px;">52</div>
<div class="t" style="left:910.44px;top:662.33px;">199</div>
<div class="t" style="left:1000.44px;top:662.33px;">239.5</div>
<div class="t" style="left:4.89px;top:684.28px;">23</div>
<svg class="i" style="left:38.89px;top:683.83px" width="8.67" height="12.44" viewBox="0 0 8.6 12.4" ><path d="M4.3 0L8.6 4.6H5.1V12.4H3.5V4.6H0z" fill="#12f312"/></svg>
<div class="t" style="left:50.67px;top:684.28px;">(+1)</div>
<div class="t" style="left:97.11px;top:687.50px;">47</div>
<svg class="i" style="left:120px;top:681.72px" width="10" height="17" viewBox="0 0 10 17" ><path d="M1 1.6V4.6L3.2 7V1.6zM9 1.6V4.6L6.8 7V1.6z" fill="#f4f4fa"/><rect x="0" y="0.3" width="10" height="1.7" fill="#000"/><path d="M1.1 1.2V4.5L3.3 7M8.9 1.2V4.5L6.7 7" fill="none" stroke="#111" stroke-width="1.15"/><rect x="3.1" y="1.2" width="3.8" height="5.6" fill="#ffdc00"/><rect x="2.9" y="6.3" width="4.2" height="1.3" fill="#0a0a0a"/><circle cx="5" cy="11.7" r="4.3" fill="#c48e4a" stroke="#0a0a0a" stroke-width="1.5"/><text x="5" y="14" font-family="Liberation Sans, sans-serif" font-size="6.4" font-weight="bold" text-anchor="middle" fill="#000">3</text></svg>
<svg class="i" style="left:262.33px;top:687.5px" width="12.44" height="12.44" viewBox="0 0 12 12" ><rect width="12" height="12" fill="#0000ff"/><path d="M1.5 1.2h9v2h-3.2v5.8h3.2v2h-9v-2h3.2v-5.8h-3.2z" fill="#fff"/></svg>
<div class="t" style="left:285.33px;top:682.61px;">Ruben (Haler)</div>
<div class="t" style="left:514.89px;top:684.28px;">Nederland</div>
<div class="t" style="left:650.44px;top:684.28px;">16.5</div>
<svg class="i" style="left:750.33px;top:686.94px" width="12.22" height="8" viewBox="0 0 12 8" ><path d="M0 4L4.3 0.2V3.2H7.7V0.2L12 4L7.7 7.8V4.8H4.3V7.8z" fill="#ff7f0e"/></svg>
<div class="t" style="left:786px;top:684.28px;">39</div>
<svg class="i" style="left:875.11px;top:684.06px" width="13" height="12" viewBox="0 0 13 12" ><path d="M0.3 0.7H8.4A3.9 3.9 0 0 1 8.4 8.6H4.5" fill="none" stroke="#000" stroke-width="1.45"/><path d="M0 8.6L5.2 4.7V12.4z" fill="#000"/></svg>
<div class="t" style="left:910.44px;top:684.28px;">189</div>
<div class="t" style="left:1000.44px;top:684.28px;">236.5</div>
<div class="t" style="left:4.89px;top:705.94px;">24</div>
<svg class="i" style="left:38.89px;top:705.5px" width="8.67" height="12.44" viewBox="0 0 8.6 12.4" ><path d="M4.3 0L8.6 4.6H5.1V12.4H3.5V4.6H0z" fill="#12f312"/></svg>
<div class="t" style="left:50.67px;top:705.94px;">(+2)</div>
<div class="t" style="left:97.11px;top:705.94px;">30</div>
<svg class="i" style="left:262.33px;top:709.17px" width="12.44" height="12.44" viewBox="0 0 12 12" ><rect width="12" height="12" fill="#0000ff"/><path d="M1.5 1.2h9v2h-3.2v5.8h3.2v2h-9v-2h3.2v-5.8h-3.2z" fill="#fff"/></svg>
<div class="t" style="left:285.33px;top:704.28px;">Weijert (Urk)</div>
<div class="t" style="left:514.89px;top:705.94px;">Nederland</div>
<div class="t" style="left:650.44px;top:705.94px;">16.3</div>
<svg class="i" style="left:750.33px;top:708.61px" width="12.22" height="8" viewBox="0 0 12 8" ><path d="M0 4L4.3 0.2V3.2H7.7V0.2L12 4L7.7 7.8V4.8H4.3V7.8z" fill="#ff7f0e"/></svg>
<div class="t" style="left:786px;top:705.94px;">42</div>
<svg class="i" style="left:875.11px;top:705.72px" width="13" height="12" viewBox="0 0 13 12" ><path d="M0.3 0.7H8.4A3.9 3.9 0 0 1 8.4 8.6H4.5" fill="none" stroke="#000" stroke-width="1.45"/><path d="M0 8.6L5.2 4.7V12.4z" fill="#000"/></svg>
<div class="t" style="left:910.44px;top:705.94px;">191</div>
<div class="t" style="left:1000.44px;top:705.94px;">234.2</div>
<div class="t" style="left:4.89px;top:727.89px;">25</div>
<svg class="i" style="left:38.89px;top:727.11px" width="8.67" height="12.44" viewBox="0 0 8.6 12.4" ><path d="M4.3 12.4L8.6 7.8H5.1V0H3.5V7.8H0z" fill="#ff1010"/></svg>
<div class="t" style="left:50.67px;top:727.89px;">(-2)</div>
<div class="t" style="left:97.11px;top:731.11px;">7</div>
<svg class="i" style="left:113.89px;top:725.33px" width="10" height="17" viewBox="0 0 10 17" ><path d="M1 1.6V4.6L3.2 7V1.6zM9 1.6V4.6L6.8 7V1.6z" fill="#f4f4fa"/><rect x="0" y="0.3" width="10" height="1.7" fill="#000"/><path d="M1.1 1.2V4.5L3.3 7M8.9 1.2V4.5L6.7 7" fill="none" stroke="#111" stroke-width="1.15"/><rect x="3.1" y="1.2" width="3.8" height="5.6" fill="#ff3000"/><rect x="2.9" y="6.3" width="4.2" height="1.3" fill="#0a0a0a"/><circle cx="5" cy="11.7" r="4.3" fill="#70757a" stroke="#0a0a0a" stroke-width="1.5"/><text x="5" y="14" font-family="Liberation Sans, sans-serif" font-size="6.4" font-weight="bold" text-anchor="middle" fill="#fff">2</text></svg>
<svg class="i" style="left:262.33px;top:731.11px" width="12.44" height="12.44" viewBox="0 0 12 12" ><rect width="12" height="12" fill="#0000ff"/><path d="M1.5 1.2h9v2h-3.2v5.8h3.2v2h-9v-2h3.2v-5.8h-3.2z" fill="#fff"/></svg>
<div class="t" style="left:285.33px;top:726.22px;">Maarten (Oud-Heverlee)</div>
<div class="t" style="left:514.89px;top:727.89px;">België</div>
<div class="t" style="left:650.44px;top:727.89px;">16.5</div>
<svg class="i" style="left:750.33px;top:730.56px" width="12.22" height="8" viewBox="0 0 12 8" ><path d="M0 4L4.3 0.2V3.2H7.7V0.2L12 4L7.7 7.8V4.8H4.3V7.8z" fill="#ff7f0e"/></svg>
<div class="t" style="left:786px;top:727.89px;">72</div>
<div class="t" style="left:910.44px;top:727.89px;">178</div>
<div class="t" style="left:1000.44px;top:727.89px;">233.2</div>
<div class="t" style="left:4.89px;top:749.83px;">26</div>
<svg class="i" style="left:38.89px;top:749.06px" width="8.67" height="12.44" viewBox="0 0 8.6 12.4" ><path d="M4.3 12.4L8.6 7.8H5.1V0H3.5V7.8H0z" fill="#ff1010"/></svg>
<div class="t" style="left:50.67px;top:749.83px;">(-1)</div>
<div class="t" style="left:97.11px;top:749.83px;">61</div>
<svg class="i" style="left:262.33px;top:753.06px" width="12.44" height="12.44" viewBox="0 0 12 12" ><rect width="12" height="12" fill="#0000ff"/><path d="M1.5 1.2h9v2h-3.2v5.8h3.2v2h-9v-2h3.2v-5.8h-3.2z" fill="#fff"/></svg>
<div class="t" style="left:285.33px;top:748.17px;">Robbert (Vleuten)</div>
<div class="t" style="left:514.89px;top:749.83px;">Nederland</div>
<div class="t" style="left:650.44px;top:749.83px;">16.0</div>
<svg class="i" style="left:750.33px;top:752.5px" width="12.22" height="8" viewBox="0 0 12 8" ><path d="M0 4L4.3 0.2V3.2H7.7V0.2L12 4L7.7 7.8V4.8H4.3V7.8z" fill="#ff7f0e"/></svg>
<div class="t" style="left:786px;top:749.83px;">74</div>
<div class="t" style="left:910.44px;top:749.83px;">194</div>
<div class="t" style="left:1000.44px;top:749.83px;">231.8</div>
<div class="t" style="left:4.89px;top:771.33px;">27</div>
<svg class="i" style="left:38.89px;top:770.89px" width="8.67" height="12.44" viewBox="0 0 8.6 12.4" ><path d="M4.3 0L8.6 4.6H5.1V12.4H3.5V4.6H0z" fill="#12f312"/></svg>
<div class="t" style="left:50.67px;top:771.33px;">(+1)</div>
<div class="t" style="left:97.11px;top:771.33px;">107</div>
<svg class="i" style="left:262.33px;top:774.56px" width="12.44" height="12.44" viewBox="0 0 12 12" ><rect width="12" height="12" fill="#0000ff"/><path d="M1.5 1.2h9v2h-3.2v5.8h3.2v2h-9v-2h3.2v-5.8h-3.2z" fill="#fff"/></svg>
<div class="t" style="left:285.33px;top:769.67px;">Wietse (Groningen)</div>
<div class="t" style="left:514.89px;top:771.33px;">Nederland</div>
<div class="t" style="left:650.44px;top:771.33px;">16.2</div>
<svg class="i" style="left:750.33px;top:774px" width="12.22" height="8" viewBox="0 0 12 8" ><path d="M0 4L4.3 0.2V3.2H7.7V0.2L12 4L7.7 7.8V4.8H4.3V7.8z" fill="#ff7f0e"/></svg>
<div class="t" style="left:786px;top:771.33px;">57</div>
<div class="t" style="left:910.44px;top:771.33px;">181</div>
<div class="t" style="left:1000.44px;top:771.33px;">231.5</div>
<div class="t" style="left:4.89px;top:792.89px;">28</div>
<svg class="i" style="left:38.89px;top:792.44px" width="8.67" height="12.44" viewBox="0 0 8.6 12.4" ><path d="M4.3 0L8.6 4.6H5.1V12.4H3.5V4.6H0z" fill="#12f312"/></svg>
<div class="t" style="left:50.67px;top:792.89px;">(+1)</div>
<div class="t" style="left:97.11px;top:792.89px;">93</div>
<svg class="i" style="left:262.33px;top:796.11px" width="12.44" height="12.44" viewBox="0 0 12 12" ><rect width="12" height="12" fill="#0000ff"/><path d="M1.5 1.2h9v2h-3.2v5.8h3.2v2h-9v-2h3.2v-5.8h-3.2z" fill="#fff"/></svg>
<div class="t" style="left:285.33px;top:791.22px;">Theo (Utrecht)</div>
<div class="t" style="left:514.89px;top:792.89px;">Nederland</div>
<div class="t" style="left:650.44px;top:792.89px;">16.2</div>
<svg class="i" style="left:750.33px;top:795.56px" width="12.22" height="8" viewBox="0 0 12 8" ><path d="M0 4L4.3 0.2V3.2H7.7V0.2L12 4L7.7 7.8V4.8H4.3V7.8z" fill="#ff7f0e"/></svg>
<div class="t" style="left:786px;top:792.89px;">54</div>
<div class="t" style="left:910.44px;top:792.89px;">183</div>
<div class="t" style="left:1000.44px;top:792.89px;">231.4</div>
<div class="t" style="left:4.89px;top:814.44px;">29</div>
<svg class="i" style="left:38.89px;top:814px" width="8.67" height="12.44" viewBox="0 0 8.6 12.4" ><path d="M4.3 0L8.6 4.6H5.1V12.4H3.5V4.6H0z" fill="#12f312"/></svg>
<div class="t" style="left:50.67px;top:814.44px;">(+1)</div>
<div class="t" style="left:97.11px;top:814.44px;">104</div>
<svg class="i" style="left:262.33px;top:817.67px" width="12.44" height="12.44" viewBox="0 0 12 12" ><rect width="12" height="12" fill="#0000ff"/><path d="M1.5 1.2h9v2h-3.2v5.8h3.2v2h-9v-2h3.2v-5.8h-3.2z" fill="#fff"/></svg>
<div class="t" style="left:285.33px;top:812.78px;">Rens (Rozenburg ZH)</div>
<div class="t" style="left:514.89px;top:814.44px;">Nederland</div>
<div class="t" style="left:650.44px;top:814.44px;">16.2</div>
<svg class="i" style="left:750.33px;top:817.11px" width="12.22" height="8" viewBox="0 0 12 8" ><path d="M0 4L4.3 0.2V3.2H7.7V0.2L12 4L7.7 7.8V4.8H4.3V7.8z" fill="#ff7f0e"/></svg>
<div class="t" style="left:786px;top:814.44px;">50</div>
<div class="t" style="left:910.44px;top:814.44px;">185</div>
<div class="t" style="left:1000.44px;top:814.44px;">230.6</div>
<div class="t" style="left:4.89px;top:835.94px;">30</div>
<svg class="i" style="left:38.89px;top:835.5px" width="8.67" height="12.44" viewBox="0 0 8.6 12.4" ><path d="M4.3 0L8.6 4.6H5.1V12.4H3.5V4.6H0z" fill="#12f312"/></svg>
<div class="t" style="left:50.67px;top:835.94px;">(+1)</div>
<div class="t" style="left:97.11px;top:835.94px;">2</div>
<svg class="i" style="left:262.33px;top:839.17px" width="12.44" height="12.44" viewBox="0 0 12 12" ><rect width="12" height="12" fill="#0000ff"/><path d="M1.5 1.2h9v2h-3.2v5.8h3.2v2h-9v-2h3.2v-5.8h-3.2z" fill="#fff"/></svg>
<div class="t" style="left:285.33px;top:834.28px;">Erik (Groesbeek)</div>
<div class="t" style="left:514.89px;top:835.94px;">Nederland</div>
<div class="t" style="left:650.44px;top:835.94px;">15.9</div>
<svg class="i" style="left:750.33px;top:838.61px" width="12.22" height="8" viewBox="0 0 12 8" ><path d="M0 4L4.3 0.2V3.2H7.7V0.2L12 4L7.7 7.8V4.8H4.3V7.8z" fill="#ff7f0e"/></svg>
<div class="t" style="left:786px;top:835.94px;">45</div>
<svg class="i" style="left:875.11px;top:835.72px" width="13" height="12" viewBox="0 0 13 12" ><path d="M0.3 0.7H8.4A3.9 3.9 0 0 1 8.4 8.6H4.5" fill="none" stroke="#000" stroke-width="1.45"/><path d="M0 8.6L5.2 4.7V12.4z" fill="#000"/></svg>
<div class="t" style="left:910.44px;top:835.94px;">206</div>
<div class="t" style="left:1000.44px;top:835.94px;">230.5</div>
<div class="t" style="left:4.89px;top:857.33px;">31</div>
<svg class="i" style="left:38.89px;top:856.89px" width="8.67" height="12.44" viewBox="0 0 8.6 12.4" ><path d="M4.3 0L8.6 4.6H5.1V12.4H3.5V4.6H0z" fill="#12f312"/></svg>
<div class="t" style="left:50.67px;top:857.33px;">(+1)</div>
<div class="t" style="left:97.11px;top:857.33px;">53</div>
<svg class="i" style="left:262.33px;top:860.56px" width="12.44" height="12.44" viewBox="0 0 12 12" ><rect width="12" height="12" fill="#0000ff"/><path d="M1.5 1.2h9v2h-3.2v5.8h3.2v2h-9v-2h3.2v-5.8h-3.2z" fill="#fff"/></svg>
<div class="t" style="left:285.33px;top:855.67px;">Winfred (Zevenaar)</div>
<div class="t" style="left:514.89px;top:857.33px;">Nederland</div>
<div class="t" style="left:650.44px;top:857.33px;">16.4</div>
<svg class="i" style="left:750.33px;top:860px" width="12.22" height="8" viewBox="0 0 12 8" ><path d="M0 4L4.3 0.2V3.2H7.7V0.2L12 4L7.7 7.8V4.8H4.3V7.8z" fill="#ff7f0e"/></svg>
<div class="t" style="left:786px;top:857.33px;">40</div>
<svg class="i" style="left:875.11px;top:857.11px" width="13" height="12" viewBox="0 0 13 12" ><path d="M0.3 0.7H8.4A3.9 3.9 0 0 1 8.4 8.6H4.5" fill="none" stroke="#000" stroke-width="1.45"/><path d="M0 8.6L5.2 4.7V12.4z" fill="#000"/></svg>
<div class="t" style="left:910.44px;top:857.33px;">185</div>
<div class="t" style="left:1000.44px;top:857.33px;">230</div>
<div class="t" style="left:4.89px;top:879.00px;">32</div>
<svg class="i" style="left:38.89px;top:878.56px" width="8.67" height="12.44" viewBox="0 0 8.6 12.4" ><path d="M4.3 0L8.6 4.6H5.1V12.4H3.5V4.6H0z" fill="#12f312"/></svg>
<div class="t" style="left:50.67px;top:879.00px;">(+1)</div>
<div class="t" style="left:97.11px;top:879.00px;">24</div>
<svg class="i" style="left:262.33px;top:882.22px" width="12.44" height="12.44" viewBox="0 0 12 12" ><rect width="12" height="12" fill="#0000ff"/><path d="M1.5 1.2h9v2h-3.2v5.8h3.2v2h-9v-2h3.2v-5.8h-3.2z" fill="#fff"/></svg>
<div class="t" style="left:285.33px;top:877.33px;">Arnold (Tilburg )</div>
<div class="t" style="left:514.89px;top:879.00px;">Ronsweersite</div>
<div class="t" style="left:650.44px;top:879.00px;">16.5</div>
<svg class="i" style="left:750.33px;top:881.67px" width="12.22" height="8" viewBox="0 0 12 8" ><path d="M0 4L4.3 0.2V3.2H7.7V0.2L12 4L7.7 7.8V4.8H4.3V7.8z" fill="#ff7f0e"/></svg>
<div class="t" style="left:786px;top:879.00px;">45</div>
<svg class="i" style="left:875.11px;top:878.78px" width="13" height="12" viewBox="0 0 13 12" ><path d="M0.3 0.7H8.4A3.9 3.9 0 0 1 8.4 8.6H4.5" fill="none" stroke="#000" stroke-width="1.45"/><path d="M0 8.6L5.2 4.7V12.4z" fill="#000"/></svg>
<div class="t" style="left:910.44px;top:879.00px;">178</div>
<div class="t" style="left:1000.44px;top:879.00px;">229.7</div>
<div class="t" style="left:4.89px;top:900.39px;">33</div>
<svg class="i" style="left:38.89px;top:899.94px" width="8.67" height="12.44" viewBox="0 0 8.6 12.4" ><path d="M4.3 0L8.6 4.6H5.1V12.4H3.5V4.6H0z" fill="#12f312"/></svg>
<div class="t" style="left:50.67px;top:900.39px;">(+1)</div>
<div class="t" style="left:97.11px;top:900.39px;">12</div>
<svg class="i" style="left:262.33px;top:903.61px" width="12.44" height="12.44" viewBox="0 0 12 12" ><rect width="12" height="12" fill="#0000ff"/><path d="M1.5 1.2h9v2h-3.2v5.8h3.2v2h-9v-2h3.2v-5.8h-3.2z" fill="#fff"/></svg>
<div class="t" style="left:285.33px;top:898.72px;">Tom van der Spek (Bennekom)</div>
<div class="t" style="left:514.89px;top:900.39px;">Nederland</div>
<div class="t" style="left:650.44px;top:900.39px;">16.4</div>
<svg class="i" style="left:750.33px;top:903.06px" width="12.22" height="8" viewBox="0 0 12 8" ><path d="M0 4L4.3 0.2V3.2H7.7V0.2L12 4L7.7 7.8V4.8H4.3V7.8z" fill="#ff7f0e"/></svg>
<div class="t" style="left:786px;top:900.39px;">42</div>
<svg class="i" style="left:875.11px;top:900.17px" width="13" height="12" viewBox="0 0 13 12" ><path d="M0.3 0.7H8.4A3.9 3.9 0 0 1 8.4 8.6H4.5" fill="none" stroke="#000" stroke-width="1.45"/><path d="M0 8.6L5.2 4.7V12.4z" fill="#000"/></svg>
<div class="t" style="left:910.44px;top:900.39px;">183</div>
<div class="t" style="left:1000.44px;top:900.39px;">229.4</div>
<div class="t" style="left:4.89px;top:921.78px;">33</div>
<svg class="i" style="left:38.89px;top:921.33px" width="8.67" height="12.44" viewBox="0 0 8.6 12.4" ><path d="M4.3 0L8.6 4.6H5.1V12.4H3.5V4.6H0z" fill="#12f312"/></svg>
<div class="t" style="left:50.67px;top:921.78px;">(+1)</div>
<div class="t" style="left:97.11px;top:921.78px;">14</div>
<svg class="i" style="left:262.33px;top:925px" width="12.44" height="12.44" viewBox="0 0 12 12" ><rect width="12" height="12" fill="#0000ff"/><path d="M1.5 1.2h9v2h-3.2v5.8h3.2v2h-9v-2h3.2v-5.8h-3.2z" fill="#fff"/></svg>
<div class="t" style="left:285.33px;top:920.11px;">Jos (Boxtel)</div>
<div class="t" style="left:514.89px;top:921.78px;">Ronsweersite</div>
<div class="t" style="left:650.44px;top:921.78px;">16.1</div>
<svg class="i" style="left:750.33px;top:924.44px" width="12.22" height="8" viewBox="0 0 12 8" ><path d="M0 4L4.3 0.2V3.2H7.7V0.2L12 4L7.7 7.8V4.8H4.3V7.8z" fill="#ff7f0e"/></svg>
<div class="t" style="left:786px;top:921.78px;">60</div>
<div class="t" style="left:910.44px;top:921.78px;">180</div>
<div class="t" style="left:1000.44px;top:921.78px;">229.4</div>
<div class="t" style="left:4.89px;top:942.61px;">35</div>
<svg class="i" style="left:38.89px;top:941.83px" width="8.67" height="12.44" viewBox="0 0 8.6 12.4" ><path d="M4.3 12.4L8.6 7.8H5.1V0H3.5V7.8H0z" fill="#ff1010"/></svg>
<div class="t" style="left:50.67px;top:942.61px;">(-8)</div>
<div class="t" style="left:97.11px;top:942.61px;">106</div>
<svg class="i" style="left:262.33px;top:945.83px" width="12.44" height="12.44" viewBox="0 0 12 12" ><rect width="12" height="12" fill="#0000ff"/><path d="M1.5 1.2h9v2h-3.2v5.8h3.2v2h-9v-2h3.2v-5.8h-3.2z" fill="#fff"/></svg>
<div class="t" style="left:285.33px;top:940.94px;">Theo (Venlo)</div>
<div class="t" style="left:514.89px;top:942.61px;">Nederland</div>
<div class="t" style="left:650.44px;top:942.61px;">16.9</div>
<svg class="i" style="left:750.33px;top:945.28px" width="12.22" height="8" viewBox="0 0 12 8" ><path d="M0 4L4.3 0.2V3.2H7.7V0.2L12 4L7.7 7.8V4.8H4.3V7.8z" fill="#ff7f0e"/></svg>
<div class="t" style="left:786px;top:942.61px;">65</div>
<div class="t" style="left:910.44px;top:942.61px;">156</div>
<svg class="i" style="left:962.11px;top:942.39px" width="13" height="12" viewBox="0 0 13 12" ><path d="M0.3 0.7H8.4A3.9 3.9 0 0 1 8.4 8.6H4.5" fill="none" stroke="#000" stroke-width="1.45"/><path d="M0 8.6L5.2 4.7V12.4z" fill="#000"/></svg>
<div class="t" style="left:1000.44px;top:942.61px;">229</div>
</div>
</body>
</html>
